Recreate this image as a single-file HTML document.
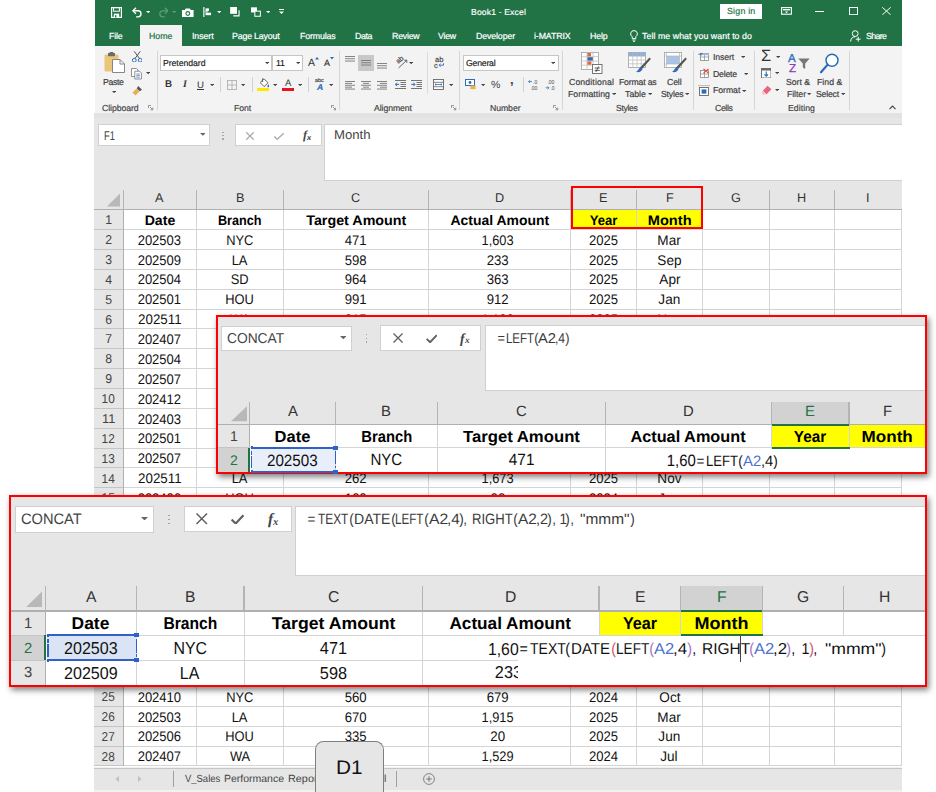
<!DOCTYPE html>
<html><head><meta charset="utf-8"><title>Book1 - Excel</title>
<style>
html,body{margin:0;padding:0}
body{width:936px;height:792px;position:relative;overflow:hidden;background:#fff;font-family:"Liberation Sans",sans-serif}
body div,body svg{position:absolute}
.ov{overflow:hidden}
.ov div,.ov svg{position:absolute}
</style></head><body>
<div style="left:95.00px;top:0.00px;width:807.00px;height:46.30px;background:#217346;"></div>
<svg style="left:110.50px;top:6.50px;" width="11" height="11" viewBox="0 0 11 11"><path d="M0.6 0.6H10.4V10.4H0.6Z" fill="none" stroke="#fff" stroke-width="1.2"/><rect x="2.6" y="0.6" width="5.8" height="3.6" fill="none" stroke="#fff" stroke-width="1"/><rect x="2.8" y="6.6" width="5.4" height="3.8" fill="#fff"/><rect x="4" y="8.2" width="1.4" height="2.2" fill="#217346"/></svg>
<svg style="left:132.00px;top:7.00px;" width="10.8" height="10.8" viewBox="0 0 12 12"><path d="M1 4.2H6.6A3.4 3.4 0 0 1 6.6 11H4.5" fill="none" stroke="#fff" stroke-width="1.5"/><path d="M4.4 0.8L1 4.2L4.4 7.6" fill="none" stroke="#fff" stroke-width="1.5"/></svg>
<svg style="left:145.80px;top:11.10px;" width="4.4" height="2.2" viewBox="0 0 4.4 2.2"><path d="M0 0H4.4L2.2 2.2Z" fill="#fff"/></svg>
<svg style="left:157.70px;top:7.00px;" width="10.8" height="10.8" viewBox="0 0 12 12"><path d="M11 4.2H5.4A3.4 3.4 0 0 0 5.4 11H7.5" fill="none" stroke="#5f9a7a" stroke-width="1.4"/><path d="M7.6 0.8L11 4.2L7.6 7.6" fill="none" stroke="#5f9a7a" stroke-width="1.4"/></svg>
<svg style="left:171.80px;top:11.10px;" width="4.4" height="2.2" viewBox="0 0 4.4 2.2"><path d="M0 0H4.4L2.2 2.2Z" fill="#5f9a7a"/></svg>
<svg style="left:182.30px;top:7.50px;" width="11.6" height="9.4" viewBox="0 0 11.6 9.4"><path d="M0 2H2.8L3.7 0.4H7.9L8.8 2H11.6V9.2H0Z" fill="#fff"/><circle cx="5.8" cy="5.5" r="2.4" fill="#217346"/><circle cx="5.8" cy="5.5" r="1.3" fill="#fff"/></svg>
<svg style="left:203.00px;top:7.00px;" width="8.5" height="10.4" viewBox="0 0 10 12"><path d="M1 0V12" stroke="#fff" stroke-width="1.3"/><rect x="3" y="1.5" width="4" height="3" fill="#fff"/><rect x="3" y="6.5" width="6.5" height="3" fill="#fff"/><path d="M2 5.5H6" stroke="#fff" stroke-width="1"/></svg>
<svg style="left:216.50px;top:11.10px;" width="4.4" height="2.2" viewBox="0 0 4.4 2.2"><path d="M0 0H4.4L2.2 2.2Z" fill="#fff"/></svg>
<svg style="left:229.70px;top:7.30px;" width="10.3" height="10" viewBox="0 0 11 11"><rect x="0" y="0" width="7.5" height="7.5" fill="#fff"/><path d="M9.8 3.5V9.8H3.5" fill="none" stroke="#fff" stroke-width="1.2"/></svg>
<svg style="left:250.90px;top:7.30px;" width="10.2" height="10" viewBox="0 0 12 11"><rect x="0" y="0" width="7" height="6" fill="#fff"/><rect x="4.5" y="4.5" width="6.5" height="6" fill="#217346" stroke="#fff" stroke-width="1.2"/></svg>
<svg style="left:265.80px;top:11.10px;" width="4.4" height="2.2" viewBox="0 0 4.4 2.2"><path d="M0 0H4.4L2.2 2.2Z" fill="#fff"/></svg>
<svg style="left:278.50px;top:9.00px;" width="5" height="6" viewBox="0 0 5 6"><path d="M0 0.5H5" stroke="#fff" stroke-width="1"/><path d="M0 2.5H5L2.5 5Z" fill="#fff"/></svg>
<div style="left:470.50px;top:5.66px;height:12px;line-height:12px;font-size:8.6px;color:#fff;white-space:nowrap;letter-spacing:0.149px;transform:rotate(0.03deg);-webkit-text-stroke:0.15px;">Book1 - Excel</div>
<div style="left:720.00px;top:4.00px;width:42.00px;height:14.50px;background:#fff;"></div>
<div style="left:726.75px;top:5.23px;height:12px;line-height:12px;font-size:8.8px;color:#217346;white-space:nowrap;letter-spacing:0.227px;transform:rotate(0.03deg);-webkit-text-stroke:0.18px;">Sign in</div>
<svg style="left:780.50px;top:7.20px;" width="11" height="8" viewBox="0 0 11 8"><rect x="0.6" y="0.6" width="9.8" height="6.6" fill="none" stroke="#fff" stroke-width="1.1"/><rect x="2" y="2" width="7" height="1.4" fill="#fff"/><path d="M3.8 4.4H7.2L5.5 6.2Z" fill="#fff"/></svg>
<div style="left:814.50px;top:11.00px;width:9.00px;height:1.00px;background:#fff;"></div>
<svg style="left:848.70px;top:7.00px;" width="9" height="8.2" viewBox="0 0 9 8.2"><rect x="0.5" y="0.5" width="8" height="7.2" fill="none" stroke="#fff" stroke-width="1"/></svg>
<svg style="left:882.00px;top:6.80px;" width="9" height="8.2" viewBox="0 0 9 8.2"><path d="M0.3 0.3L8.7 7.9M8.7 0.3L0.3 7.9" stroke="#fff" stroke-width="1"/></svg>
<div style="left:139.50px;top:25.00px;width:42.00px;height:21.50px;background:#f3f3f3;"></div>
<div style="left:109.25px;top:29.93px;height:12px;line-height:12px;font-size:8.8px;color:#fff;white-space:nowrap;letter-spacing:-0.170px;transform:rotate(0.03deg);-webkit-text-stroke:0.2px;">File</div>
<div style="left:148.55px;top:29.93px;height:12px;line-height:12px;font-size:8.8px;color:#217346;white-space:nowrap;letter-spacing:0.006px;transform:rotate(0.03deg);-webkit-text-stroke:0.2px;">Home</div>
<div style="left:191.55px;top:29.93px;height:12px;line-height:12px;font-size:8.8px;color:#fff;white-space:nowrap;letter-spacing:-0.085px;transform:rotate(0.03deg);-webkit-text-stroke:0.2px;">Insert</div>
<div style="left:232.25px;top:29.93px;height:12px;line-height:12px;font-size:8.8px;color:#fff;white-space:nowrap;letter-spacing:-0.175px;transform:rotate(0.03deg);-webkit-text-stroke:0.2px;">Page Layout</div>
<div style="left:299.75px;top:29.93px;height:12px;line-height:12px;font-size:8.8px;color:#fff;white-space:nowrap;letter-spacing:-0.147px;transform:rotate(0.03deg);-webkit-text-stroke:0.2px;">Formulas</div>
<div style="left:354.50px;top:29.93px;height:12px;line-height:12px;font-size:8.8px;color:#fff;white-space:nowrap;letter-spacing:-0.397px;transform:rotate(0.03deg);-webkit-text-stroke:0.2px;">Data</div>
<div style="left:391.55px;top:29.93px;height:12px;line-height:12px;font-size:8.8px;color:#fff;white-space:nowrap;letter-spacing:-0.226px;transform:rotate(0.03deg);-webkit-text-stroke:0.2px;">Review</div>
<div style="left:438.00px;top:29.93px;height:12px;line-height:12px;font-size:8.8px;color:#fff;white-space:nowrap;letter-spacing:-0.229px;transform:rotate(0.03deg);-webkit-text-stroke:0.2px;">View</div>
<div style="left:475.80px;top:29.93px;height:12px;line-height:12px;font-size:8.8px;color:#fff;white-space:nowrap;letter-spacing:-0.124px;transform:rotate(0.03deg);-webkit-text-stroke:0.2px;">Developer</div>
<div style="left:534.35px;top:29.93px;height:12px;line-height:12px;font-size:8.8px;color:#fff;white-space:nowrap;letter-spacing:-0.122px;transform:rotate(0.03deg);-webkit-text-stroke:0.2px;">i-MATRIX</div>
<div style="left:590.45px;top:29.93px;height:12px;line-height:12px;font-size:8.8px;color:#fff;white-space:nowrap;letter-spacing:-0.150px;transform:rotate(0.03deg);-webkit-text-stroke:0.2px;">Help</div>
<svg style="left:629.50px;top:29.50px;" width="8" height="12" viewBox="0 0 8 12"><path d="M4 0.6A3.3 3.3 0 0 1 5.8 6.7V8.6H2.2V6.7A3.3 3.3 0 0 1 4 0.6Z" fill="none" stroke="#fff" stroke-width="1"/><path d="M2.4 10H5.6M3 11.4H5" stroke="#fff" stroke-width="0.9"/></svg>
<div style="left:641.50px;top:29.93px;height:12px;line-height:12px;font-size:8.8px;color:#fff;white-space:nowrap;letter-spacing:0.052px;transform:rotate(0.03deg);-webkit-text-stroke:0.2px;">Tell me what you want to do</div>
<svg style="left:850.00px;top:29.50px;" width="11" height="12" viewBox="0 0 11 12"><circle cx="5.2" cy="3.6" r="2.9" fill="none" stroke="#fff" stroke-width="1"/><path d="M0.6 11.5C0.8 8 3 6.8 5.2 6.8" fill="none" stroke="#fff" stroke-width="1"/><path d="M8.2 6.8V11.6M5.8 9.2H10.6" stroke="#fff" stroke-width="1"/></svg>
<div style="left:865.60px;top:29.93px;height:12px;line-height:12px;font-size:8.8px;color:#fff;white-space:nowrap;letter-spacing:-0.637px;transform:rotate(0.03deg);-webkit-text-stroke:0.2px;">Share</div>
<div style="left:95.00px;top:46.00px;width:807.00px;height:67.00px;background:#f3f3f3;"></div>
<div style="left:157.00px;top:50.50px;width:1.00px;height:59.50px;background:#d6d6d6;"></div>
<div style="left:338.80px;top:50.50px;width:1.00px;height:59.50px;background:#d6d6d6;"></div>
<div style="left:458.50px;top:50.50px;width:1.00px;height:59.50px;background:#d6d6d6;"></div>
<div style="left:561.50px;top:50.50px;width:1.00px;height:59.50px;background:#d6d6d6;"></div>
<div style="left:692.50px;top:50.50px;width:1.00px;height:59.50px;background:#d6d6d6;"></div>
<div style="left:754.00px;top:50.50px;width:1.00px;height:59.50px;background:#d6d6d6;"></div>
<div style="left:848.50px;top:50.50px;width:1.00px;height:59.50px;background:#d6d6d6;"></div>
<div style="left:102.25px;top:101.89px;height:12px;line-height:12px;font-size:8.7px;color:#444;white-space:nowrap;letter-spacing:-0.082px;transform:rotate(0.03deg);-webkit-text-stroke:0.18px;">Clipboard</div>
<div style="left:233.50px;top:101.89px;height:12px;line-height:12px;font-size:8.7px;color:#444;white-space:nowrap;letter-spacing:-0.102px;transform:rotate(0.03deg);-webkit-text-stroke:0.18px;">Font</div>
<div style="left:374.30px;top:101.89px;height:12px;line-height:12px;font-size:8.7px;color:#444;white-space:nowrap;letter-spacing:-0.076px;transform:rotate(0.03deg);-webkit-text-stroke:0.18px;">Alignment</div>
<div style="left:489.75px;top:101.89px;height:12px;line-height:12px;font-size:8.7px;color:#444;white-space:nowrap;letter-spacing:-0.074px;transform:rotate(0.03deg);-webkit-text-stroke:0.18px;">Number</div>
<div style="left:616.25px;top:101.89px;height:12px;line-height:12px;font-size:8.7px;color:#444;white-space:nowrap;letter-spacing:-0.365px;transform:rotate(0.03deg);-webkit-text-stroke:0.18px;">Styles</div>
<div style="left:715.05px;top:101.89px;height:12px;line-height:12px;font-size:8.7px;color:#444;white-space:nowrap;letter-spacing:-0.368px;transform:rotate(0.03deg);-webkit-text-stroke:0.18px;">Cells</div>
<div style="left:788.20px;top:101.89px;height:12px;line-height:12px;font-size:8.7px;color:#444;white-space:nowrap;letter-spacing:0.057px;transform:rotate(0.03deg);-webkit-text-stroke:0.18px;">Editing</div>
<svg style="left:148.00px;top:105.00px;" width="5.5" height="5.5" viewBox="0 0 5.5 5.5"><path d="M0.4 3V0.4H3" fill="none" stroke="#777" stroke-width="0.8"/><path d="M2 2L4.6 4.6M4.8 2.6V4.8H2.6" fill="none" stroke="#777" stroke-width="0.8"/></svg>
<svg style="left:330.50px;top:105.00px;" width="5.5" height="5.5" viewBox="0 0 5.5 5.5"><path d="M0.4 3V0.4H3" fill="none" stroke="#777" stroke-width="0.8"/><path d="M2 2L4.6 4.6M4.8 2.6V4.8H2.6" fill="none" stroke="#777" stroke-width="0.8"/></svg>
<svg style="left:451.30px;top:105.00px;" width="5.5" height="5.5" viewBox="0 0 5.5 5.5"><path d="M0.4 3V0.4H3" fill="none" stroke="#777" stroke-width="0.8"/><path d="M2 2L4.6 4.6M4.8 2.6V4.8H2.6" fill="none" stroke="#777" stroke-width="0.8"/></svg>
<svg style="left:553.20px;top:105.00px;" width="5.5" height="5.5" viewBox="0 0 5.5 5.5"><path d="M0.4 3V0.4H3" fill="none" stroke="#777" stroke-width="0.8"/><path d="M2 2L4.6 4.6M4.8 2.6V4.8H2.6" fill="none" stroke="#777" stroke-width="0.8"/></svg>
<svg style="left:888.50px;top:104.50px;" width="7" height="5" viewBox="0 0 7 5"><path d="M0.5 4.2L3.5 1L6.5 4.2" fill="none" stroke="#444" stroke-width="1.1"/></svg>
<svg style="left:104.00px;top:52.00px;" width="21.5" height="21" viewBox="0 0 21.5 21"><rect x="0.5" y="2.5" width="14" height="17" rx="1" fill="#e8c77b" /><rect x="4" y="0.8" width="7" height="3.4" rx="0.8" fill="#6b6b6b"/><rect x="6" y="0" width="3" height="2" fill="#6b6b6b"/><path d="M8.5 7.5H16L20.5 12V20.5H8.5Z" fill="#fff" stroke="#7a7a7a" stroke-width="0.9"/><path d="M16 7.5V12H20.5" fill="none" stroke="#7a7a7a" stroke-width="0.9"/></svg>
<div style="left:103.05px;top:75.99px;height:12px;line-height:12px;font-size:8.7px;color:#3b3b3b;white-space:nowrap;letter-spacing:-0.350px;transform:rotate(0.03deg);-webkit-text-stroke:0.18px;">Paste</div>
<svg style="left:111.55px;top:91.22px;" width="4.3" height="2.15" viewBox="0 0 4.3 2.15"><path d="M0 0H4.3L2.15 2.15Z" fill="#444"/></svg>
<svg style="left:131.50px;top:50.50px;" width="10.5" height="11.5" viewBox="0 0 10.5 11.5"><path d="M2.2 0.3L7.6 7.6M8.3 0.3L2.9 7.6" stroke="#555" stroke-width="1"/><circle cx="2.3" cy="9.2" r="1.9" fill="none" stroke="#2b6cb8" stroke-width="1"/><circle cx="8.2" cy="9.2" r="1.9" fill="none" stroke="#2b6cb8" stroke-width="1"/></svg>
<svg style="left:130.50px;top:68.00px;" width="11" height="11.5" viewBox="0 0 11 11.5"><path d="M0.5 0.5H5.5L7 2V8.5H0.5Z" fill="#fff" stroke="#777" stroke-width="0.8"/><path d="M3.8 3.2H8.6L10.4 5V11H3.8Z" fill="#fff" stroke="#777" stroke-width="0.8"/><path d="M5.3 6H8.8M5.3 7.6H8.8M5.3 9.2H8.8" stroke="#2b6cb8" stroke-width="0.7"/></svg>
<svg style="left:146.15px;top:72.42px;" width="4.3" height="2.15" viewBox="0 0 4.3 2.15"><path d="M0 0H4.3L2.15 2.15Z" fill="#444"/></svg>
<svg style="left:131.50px;top:84.50px;" width="11" height="11" viewBox="0 0 11 11"><path d="M6.2 1L10 4.8L7.6 6.3L4.7 3.4Z" fill="#555"/><path d="M4.4 3.8L7.2 6.6L3.6 10.6L0.4 7.4Z" fill="#e8b04e"/></svg>
<div style="left:160.40px;top:54.60px;width:112.10px;height:16.40px;background:#fff;border:1px solid #c6c6c6;box-sizing:border-box;"></div>
<div style="left:272.00px;top:54.60px;width:31.30px;height:16.40px;background:#fff;border:1px solid #c6c6c6;box-sizing:border-box;"></div>
<div style="left:163.20px;top:56.99px;height:12px;line-height:12px;font-size:8.7px;color:#222;white-space:nowrap;letter-spacing:-0.055px;transform:rotate(0.03deg);-webkit-text-stroke:0.18px;">Pretendard</div>
<svg style="left:264.85px;top:62.12px;" width="4.3" height="2.15" viewBox="0 0 4.3 2.15"><path d="M0 0H4.3L2.15 2.15Z" fill="#444"/></svg>
<div style="left:275.60px;top:56.99px;height:12px;line-height:12px;font-size:8.7px;color:#222;white-space:nowrap;letter-spacing:-0.266px;transform:rotate(0.03deg);-webkit-text-stroke:0.18px;">11</div>
<svg style="left:296.15px;top:62.12px;" width="4.3" height="2.15" viewBox="0 0 4.3 2.15"><path d="M0 0H4.3L2.15 2.15Z" fill="#444"/></svg>
<div style="left:307.50px;top:55.41px;height:15px;line-height:15px;font-size:10.5px;color:#333;white-space:nowrap;transform:rotate(0.03deg);">A</div>
<svg style="left:314.80px;top:57.00px;" width="4" height="2.5" viewBox="0 0 4 2.5"><path d="M0 2.5L2 0L4 2.5Z" fill="#2b6cb8"/></svg>
<div style="left:324.20px;top:57.40px;height:13px;line-height:13px;font-size:9px;color:#333;white-space:nowrap;transform:rotate(0.03deg);-webkit-text-stroke:0.18px;">A</div>
<svg style="left:330.30px;top:57.20px;" width="4" height="2.5" viewBox="0 0 4 2.5"><path d="M0 0L2 2.5L4 0Z" fill="#2b6cb8"/></svg>
<div style="left:164.76px;top:77.37px;height:14px;line-height:14px;font-size:9.8px;color:#333;white-space:nowrap;font-weight:700;transform:rotate(0.03deg);">B</div>
<div style="left:183.01px;top:77.44px;height:14px;line-height:14px;font-size:10px;color:#333;white-space:nowrap;transform:rotate(0.03deg);font-style:italic;font-family:'Liberation Serif',serif;font-weight:700;">I</div>
<div style="left:196.83px;top:77.60px;height:13px;line-height:13px;font-size:9.6px;color:#333;white-space:nowrap;transform:rotate(0.03deg);text-decoration:underline;">U</div>
<svg style="left:209.55px;top:83.72px;" width="4.3" height="2.15" viewBox="0 0 4.3 2.15"><path d="M0 0H4.3L2.15 2.15Z" fill="#444"/></svg>
<div style="left:220.20px;top:77.00px;width:1.00px;height:15.00px;background:#d0d0d0;"></div>
<svg style="left:227.00px;top:79.50px;" width="10" height="10" viewBox="0 0 10 10"><rect x="0.5" y="0.5" width="9" height="9" fill="none" stroke="#b0b0b0" stroke-width="0.9"/><path d="M5 0.5V9.5M0.5 5H9.5" stroke="#b0b0b0" stroke-width="0.9"/></svg>
<svg style="left:241.45px;top:83.72px;" width="4.3" height="2.15" viewBox="0 0 4.3 2.15"><path d="M0 0H4.3L2.15 2.15Z" fill="#444"/></svg>
<div style="left:251.70px;top:77.00px;width:1.00px;height:15.00px;background:#d0d0d0;"></div>
<svg style="left:257.50px;top:77.50px;" width="11" height="10" viewBox="0 0 11 10"><path d="M3.2 3.4L6 0.8L10 4.8L6.2 8.6L2.4 4.8Z" fill="#fff" stroke="#555" stroke-width="0.9"/><path d="M4.6 0.4V4" stroke="#555" stroke-width="0.9"/><path d="M10.3 6.2C10.3 6.2 9.4 7.6 9.4 8.3A0.9 0.9 0 0 0 11.2 8.3C11.2 7.6 10.3 6.2 10.3 6.2Z" fill="#2b6cb8"/></svg>
<div style="left:257.30px;top:88.20px;width:11.50px;height:2.60px;background:#ffe800;"></div>
<svg style="left:272.55px;top:83.72px;" width="4.3" height="2.15" viewBox="0 0 4.3 2.15"><path d="M0 0H4.3L2.15 2.15Z" fill="#444"/></svg>
<div style="left:284.63px;top:76.47px;height:13px;line-height:13px;font-size:9.5px;color:#333;white-space:nowrap;transform:rotate(0.03deg);">A</div>
<div style="left:282.20px;top:88.20px;width:11.50px;height:2.60px;background:#e81123;"></div>
<svg style="left:297.55px;top:83.72px;" width="4.3" height="2.15" viewBox="0 0 4.3 2.15"><path d="M0 0H4.3L2.15 2.15Z" fill="#444"/></svg>
<div style="left:307.70px;top:77.00px;width:1.00px;height:15.00px;background:#d0d0d0;"></div>
<div style="left:314.57px;top:76.39px;height:8px;line-height:8px;font-size:5.5px;color:#444;white-space:nowrap;transform:rotate(0.03deg);-webkit-text-stroke:0.18px;">abc</div>
<div style="left:316.67px;top:80.72px;height:12px;line-height:12px;font-size:8.5px;color:#2b6cb8;white-space:nowrap;transform:rotate(0.03deg);font-style:italic;font-weight:700;-webkit-text-stroke:0.18px;">A</div>
<svg style="left:328.85px;top:83.72px;" width="4.3" height="2.15" viewBox="0 0 4.3 2.15"><path d="M0 0H4.3L2.15 2.15Z" fill="#444"/></svg>
<div style="left:358.00px;top:55.40px;width:16.00px;height:15.40px;background:#c8c8c8;"></div>
<svg style="left:345.00px;top:56.00px;" width="10" height="6.8999999999999995" viewBox="0 0 10 6.8999999999999995"><rect x="0" y="0.0" width="10" height="0.9" fill="#777"/><rect x="0" y="2.3" width="10" height="0.9" fill="#777"/><rect x="0" y="4.6" width="10" height="0.9" fill="#777"/></svg>
<svg style="left:361.00px;top:59.70px;" width="10" height="6.8999999999999995" viewBox="0 0 10 6.8999999999999995"><rect x="0" y="0.0" width="10" height="0.9" fill="#777"/><rect x="0" y="2.3" width="10" height="0.9" fill="#777"/><rect x="0" y="4.6" width="10" height="0.9" fill="#777"/></svg>
<svg style="left:377.00px;top:62.80px;" width="10" height="6.8999999999999995" viewBox="0 0 10 6.8999999999999995"><rect x="0" y="0.0" width="10" height="0.9" fill="#777"/><rect x="0" y="2.3" width="10" height="0.9" fill="#777"/><rect x="0" y="4.6" width="10" height="0.9" fill="#777"/></svg>
<div style="left:396.11px;top:55.21px;height:10px;line-height:10px;font-size:7px;color:#444;white-space:nowrap;transform:rotate(-42deg);-webkit-text-stroke:0.15px;">ab</div>
<svg style="left:397.00px;top:56.50px;" width="11" height="12" viewBox="0 0 11 12"><path d="M1.5 11L9.8 3.2M9.8 3.2H7.2M9.8 3.2V5.8" stroke="#555" stroke-width="0.9" fill="none"/></svg>
<svg style="left:408.85px;top:62.12px;" width="4.3" height="2.15" viewBox="0 0 4.3 2.15"><path d="M0 0H4.3L2.15 2.15Z" fill="#444"/></svg>
<div style="left:427.00px;top:52.00px;width:1.00px;height:42.00px;background:#dcdcdc;"></div>
<div style="left:434.57px;top:53.61px;height:11px;line-height:11px;font-size:7.6px;color:#444;white-space:nowrap;transform:rotate(0.03deg);-webkit-text-stroke:0.15px;">ab</div>
<div style="left:433.90px;top:59.81px;height:11px;line-height:11px;font-size:7.6px;color:#444;white-space:nowrap;transform:rotate(0.03deg);-webkit-text-stroke:0.15px;">c</div>
<svg style="left:438.00px;top:63.00px;" width="6" height="5" viewBox="0 0 6 5"><path d="M5.5 0.3V2.2H1.2M2.6 0.8L1 2.2L2.6 3.8" fill="none" stroke="#2b6cb8" stroke-width="0.9"/></svg>
<svg style="left:345.00px;top:81.00px;" width="10" height="9.5" viewBox="0 0 10 9.5"><rect x="0" y="0.0" width="10" height="0.9" fill="#777"/><rect x="0" y="1.9" width="7" height="0.9" fill="#777"/><rect x="0" y="3.8" width="10" height="0.9" fill="#777"/><rect x="0" y="5.699999999999999" width="7" height="0.9" fill="#777"/><rect x="0" y="7.6" width="10" height="0.9" fill="#777"/></svg>
<svg style="left:361.00px;top:81.00px;" width="10" height="9.5" viewBox="0 0 10 9.5"><rect x="0.0" y="0.0" width="10" height="0.9" fill="#777"/><rect x="2.0" y="1.9" width="6" height="0.9" fill="#777"/><rect x="0.0" y="3.8" width="10" height="0.9" fill="#777"/><rect x="2.0" y="5.699999999999999" width="6" height="0.9" fill="#777"/><rect x="0.0" y="7.6" width="10" height="0.9" fill="#777"/></svg>
<svg style="left:377.00px;top:81.00px;" width="10" height="9.5" viewBox="0 0 10 9.5"><rect x="0" y="0.0" width="10" height="0.9" fill="#777"/><rect x="3" y="1.9" width="7" height="0.9" fill="#777"/><rect x="0" y="3.8" width="10" height="0.9" fill="#777"/><rect x="3" y="5.699999999999999" width="7" height="0.9" fill="#777"/><rect x="0" y="7.6" width="10" height="0.9" fill="#777"/></svg>
<svg style="left:394.50px;top:80.00px;" width="11" height="10" viewBox="0 0 11 10"><rect x="0" y="0" width="11" height="0.9" fill="#666"/><rect x="5.5" y="2" width="5.5" height="0.9" fill="#666"/><rect x="5.5" y="4" width="5.5" height="0.9" fill="#666"/><rect x="5.5" y="6" width="5.5" height="0.9" fill="#666"/><rect x="0" y="8" width="11" height="0.9" fill="#666"/><path d="M4.2 4.4H0.6M2 2.6L0.4 4.4L2 6.2" stroke="#2b6cb8" stroke-width="1" fill="none"/></svg>
<svg style="left:410.50px;top:80.00px;" width="11" height="10" viewBox="0 0 11 10"><rect x="0" y="0" width="11" height="0.9" fill="#666"/><rect x="5.5" y="2" width="5.5" height="0.9" fill="#666"/><rect x="5.5" y="4" width="5.5" height="0.9" fill="#666"/><rect x="5.5" y="6" width="5.5" height="0.9" fill="#666"/><rect x="0" y="8" width="11" height="0.9" fill="#666"/><path d="M0.2 4.4H3.8M2.4 2.6L4 4.4L2.4 6.2" stroke="#2b6cb8" stroke-width="1" fill="none"/></svg>
<svg style="left:433.00px;top:79.00px;" width="11" height="11" viewBox="0 0 11 11"><rect x="0.5" y="0.5" width="10" height="10" fill="#fff" stroke="#666" stroke-width="0.9"/><path d="M0.5 3.3H10.5M0.5 7.7H10.5" stroke="#666" stroke-width="0.8"/><path d="M2 5.5H9M3.2 4.4L2 5.5L3.2 6.6M7.8 4.4L9 5.5L7.8 6.6" stroke="#2b6cb8" stroke-width="0.8" fill="none"/></svg>
<svg style="left:448.85px;top:83.72px;" width="4.3" height="2.15" viewBox="0 0 4.3 2.15"><path d="M0 0H4.3L2.15 2.15Z" fill="#444"/></svg>
<div style="left:463.00px;top:54.70px;width:96.00px;height:16.80px;background:#fff;border:1px solid #c6c6c6;box-sizing:border-box;"></div>
<div style="left:465.80px;top:56.99px;height:12px;line-height:12px;font-size:8.7px;color:#222;white-space:nowrap;letter-spacing:-0.207px;transform:rotate(0.03deg);-webkit-text-stroke:0.18px;">General</div>
<svg style="left:550.85px;top:62.12px;" width="4.3" height="2.15" viewBox="0 0 4.3 2.15"><path d="M0 0H4.3L2.15 2.15Z" fill="#444"/></svg>
<svg style="left:464.50px;top:79.00px;" width="12" height="11" viewBox="0 0 12 11"><rect x="0.5" y="0.5" width="9" height="6" fill="#fff" stroke="#2b6cb8" stroke-width="1"/><circle cx="5" cy="3.5" r="1.4" fill="#2b6cb8"/><ellipse cx="8" cy="7.4" rx="3" ry="1.1" fill="#e8b04e"/><ellipse cx="8" cy="9.2" rx="3" ry="1.1" fill="#e8b04e"/></svg>
<svg style="left:481.45px;top:83.72px;" width="4.3" height="2.15" viewBox="0 0 4.3 2.15"><path d="M0 0H4.3L2.15 2.15Z" fill="#444"/></svg>
<div style="left:491.33px;top:76.61px;height:15px;line-height:15px;font-size:10.5px;color:#444;white-space:nowrap;transform:rotate(0.03deg);">%</div>
<div style="left:510.19px;top:70.97px;height:18px;line-height:18px;font-size:13px;color:#444;white-space:nowrap;transform:rotate(0.03deg);font-weight:700;">,</div>
<div style="left:522.70px;top:77.00px;width:1.00px;height:15.00px;background:#d0d0d0;"></div>
<svg style="left:528.00px;top:78.50px;" width="12" height="12" viewBox="0 0 12 12"><path d="M0.6 2.6H4M2 1.2L0.6 2.6L2 4" stroke="#2b6cb8" stroke-width="0.8" fill="none"/><text x="5" y="5" font-size="5" fill="#444" font-family="Liberation Sans">.0</text><text x="2.4" y="11.2" font-size="5" fill="#444" font-family="Liberation Sans">.00</text></svg>
<svg style="left:544.50px;top:78.50px;" width="12" height="12" viewBox="0 0 12 12"><path d="M0.6 8.8H4M2.6 7.4L4 8.8L2.6 10.2" stroke="#2b6cb8" stroke-width="0.8" fill="none"/><text x="2.4" y="5" font-size="5" fill="#444" font-family="Liberation Sans">.00</text><text x="5.4" y="11.2" font-size="5" fill="#444" font-family="Liberation Sans">.0</text></svg>
<svg style="left:581.00px;top:52.00px;" width="21.5" height="22" viewBox="0 0 21.5 22"><rect x="0.5" y="0.5" width="17" height="17" fill="#fff" stroke="#a0a0a0" stroke-width="0.8"/><path d="M0.5 4.7H17.5M0.5 9H17.5M0.5 13.2H17.5M6 0.5V17.5M12 0.5V17.5" stroke="#b8b8b8" stroke-width="0.7"/><rect x="6.4" y="1" width="3.6" height="3.4" fill="#e8643c"/><rect x="6.4" y="5.2" width="5.4" height="3.4" fill="#2b6cb8"/><rect x="6.4" y="9.4" width="4" height="3.4" fill="#e8643c"/><rect x="11.5" y="12.5" width="9.5" height="9" fill="#fff" stroke="#666" stroke-width="0.9"/><path d="M13.6 16H18.8M13.6 18.4H18.8M17.6 14.4L14.8 20" stroke="#333" stroke-width="0.8"/></svg>
<div style="left:568.80px;top:75.99px;height:12px;line-height:12px;font-size:8.7px;color:#3b3b3b;white-space:nowrap;letter-spacing:0.134px;transform:rotate(0.03deg);-webkit-text-stroke:0.18px;">Conditional</div>
<div style="left:568.30px;top:87.69px;height:12px;line-height:12px;font-size:8.7px;color:#3b3b3b;white-space:nowrap;letter-spacing:0.042px;transform:rotate(0.03deg);-webkit-text-stroke:0.18px;">Formatting</div>
<svg style="left:611.85px;top:93.22px;" width="4.3" height="2.15" viewBox="0 0 4.3 2.15"><path d="M0 0H4.3L2.15 2.15Z" fill="#444"/></svg>
<svg style="left:628.00px;top:52.00px;" width="23" height="22" viewBox="0 0 23 22"><rect x="0.5" y="0.5" width="17" height="15" fill="#fff" stroke="#a0a0a0" stroke-width="0.8"/><rect x="0.5" y="0.5" width="17" height="3.6" fill="#8db0dc"/><path d="M0.5 4.2H17.5M0.5 8H17.5M0.5 11.8H17.5M4.8 0.5V15.5M9 0.5V15.5M13.2 0.5V15.5" stroke="#b8b8b8" stroke-width="0.7"/><path d="M21.5 5.5L22.8 7L14 17L12 15.5Z" fill="#555"/><path d="M12.5 15L14.5 17C13 20.5 10 20.5 8 19.8C10 19 10.5 16.5 12.5 15Z" fill="#2b6cb8"/></svg>
<div style="left:618.85px;top:75.99px;height:12px;line-height:12px;font-size:8.7px;color:#3b3b3b;white-space:nowrap;letter-spacing:-0.184px;transform:rotate(0.03deg);-webkit-text-stroke:0.18px;">Format as</div>
<div style="left:625.10px;top:87.69px;height:12px;line-height:12px;font-size:8.7px;color:#3b3b3b;white-space:nowrap;letter-spacing:0.040px;transform:rotate(0.03deg);-webkit-text-stroke:0.18px;">Table</div>
<svg style="left:648.15px;top:93.22px;" width="4.3" height="2.15" viewBox="0 0 4.3 2.15"><path d="M0 0H4.3L2.15 2.15Z" fill="#444"/></svg>
<svg style="left:664.00px;top:52.00px;" width="23" height="22" viewBox="0 0 23 22"><rect x="0.5" y="0.5" width="17" height="15" fill="#fff" stroke="#a0a0a0" stroke-width="0.8"/><rect x="2.5" y="4" width="13" height="8" fill="#a8c4e8"/><path d="M0.5 4H17.5M0.5 12H17.5M2.5 0.5V15.5M15.5 0.5V15.5" stroke="#b8b8b8" stroke-width="0.7"/><path d="M21.5 5.5L22.8 7L14 17L12 15.5Z" fill="#555"/><path d="M12.5 15L14.5 17C13 20.5 10 20.5 8 19.8C10 19 10.5 16.5 12.5 15Z" fill="#2b6cb8"/></svg>
<div style="left:667.05px;top:75.99px;height:12px;line-height:12px;font-size:8.7px;color:#3b3b3b;white-space:nowrap;letter-spacing:-0.122px;transform:rotate(0.03deg);-webkit-text-stroke:0.18px;">Cell</div>
<div style="left:661.05px;top:87.69px;height:12px;line-height:12px;font-size:8.7px;color:#3b3b3b;white-space:nowrap;letter-spacing:-0.199px;transform:rotate(0.03deg);-webkit-text-stroke:0.18px;">Styles</div>
<svg style="left:685.15px;top:93.22px;" width="4.3" height="2.15" viewBox="0 0 4.3 2.15"><path d="M0 0H4.3L2.15 2.15Z" fill="#444"/></svg>
<svg style="left:698.00px;top:51.00px;" width="12" height="12" viewBox="0 0 12 12"><rect x="2.5" y="2.5" width="8" height="7" fill="#fff" stroke="#888" stroke-width="0.8"/><path d="M2.5 6H10.5M6.5 2.5V9.5" stroke="#888" stroke-width="0.7"/><path d="M0.3 3.2H4.2M3 1.8L4.4 3.2L3 4.6" stroke="#2b6cb8" stroke-width="0.9" fill="none"/><rect x="5" y="2.2" width="6" height="2" fill="#9ab8e0"/></svg>
<div style="left:712.80px;top:51.39px;height:12px;line-height:12px;font-size:8.7px;color:#3b3b3b;white-space:nowrap;letter-spacing:-0.093px;transform:rotate(0.03deg);-webkit-text-stroke:0.18px;">Insert</div>
<svg style="left:740.85px;top:56.22px;" width="4.3" height="2.15" viewBox="0 0 4.3 2.15"><path d="M0 0H4.3L2.15 2.15Z" fill="#444"/></svg>
<svg style="left:698.00px;top:68.00px;" width="12" height="12" viewBox="0 0 12 12"><rect x="2.5" y="2.5" width="8" height="7" fill="#fff" stroke="#888" stroke-width="0.8"/><path d="M2.5 6H10.5M6.5 2.5V9.5" stroke="#888" stroke-width="0.7"/><path d="M5.5 0.8L10.5 5.2M10.5 0.8L5.5 5.2" stroke="#e8412c" stroke-width="1.1"/></svg>
<div style="left:712.80px;top:67.99px;height:12px;line-height:12px;font-size:8.7px;color:#3b3b3b;white-space:nowrap;letter-spacing:-0.192px;transform:rotate(0.03deg);-webkit-text-stroke:0.18px;">Delete</div>
<svg style="left:743.85px;top:72.72px;" width="4.3" height="2.15" viewBox="0 0 4.3 2.15"><path d="M0 0H4.3L2.15 2.15Z" fill="#444"/></svg>
<svg style="left:698.00px;top:84.50px;" width="12" height="12" viewBox="0 0 12 12"><rect x="1.5" y="2.5" width="9" height="8" fill="#fff" stroke="#666" stroke-width="0.9"/><rect x="3.6" y="4.4" width="4.8" height="4.2" fill="#2b6cb8"/><path d="M0.5 0.6H11.5" stroke="#666" stroke-width="0.8" stroke-dasharray="1 1"/></svg>
<div style="left:712.80px;top:84.49px;height:12px;line-height:12px;font-size:8.7px;color:#3b3b3b;white-space:nowrap;letter-spacing:-0.042px;transform:rotate(0.03deg);-webkit-text-stroke:0.18px;">Format</div>
<svg style="left:742.15px;top:89.72px;" width="4.3" height="2.15" viewBox="0 0 4.3 2.15"><path d="M0 0H4.3L2.15 2.15Z" fill="#444"/></svg>
<div style="left:760.50px;top:44.38px;height:23px;line-height:23px;font-size:16.5px;color:#333;white-space:nowrap;transform:rotate(0.03deg);">Σ</div>
<svg style="left:775.85px;top:55.72px;" width="4.3" height="2.15" viewBox="0 0 4.3 2.15"><path d="M0 0H4.3L2.15 2.15Z" fill="#444"/></svg>
<svg style="left:760.50px;top:67.50px;" width="10.5" height="10.5" viewBox="0 0 10.5 10.5"><rect x="0.5" y="0.5" width="9.5" height="9.5" fill="#fff" stroke="#666" stroke-width="0.9"/><rect x="0.5" y="0.5" width="9.5" height="2" fill="#666"/><path d="M5.25 3.6V8M3.4 6.3L5.25 8.2L7.1 6.3" stroke="#2b6cb8" stroke-width="1.1" fill="none"/></svg>
<svg style="left:775.15px;top:72.22px;" width="4.3" height="2.15" viewBox="0 0 4.3 2.15"><path d="M0 0H4.3L2.15 2.15Z" fill="#444"/></svg>
<svg style="left:760.50px;top:85.00px;" width="11" height="10" viewBox="0 0 11 10"><path d="M6.6 0.8L10.4 4.2L5.6 9.2L1.8 5.8Z" fill="#e8647c"/><path d="M1.8 5.8L5.6 9.2L4.6 9.8H2.2L0.6 8.2Z" fill="#f7c4cc"/></svg>
<svg style="left:775.15px;top:89.22px;" width="4.3" height="2.15" viewBox="0 0 4.3 2.15"><path d="M0 0H4.3L2.15 2.15Z" fill="#444"/></svg>
<div style="left:788.46px;top:49.56px;height:16px;line-height:16px;font-size:11.5px;color:#2b6cb8;white-space:nowrap;transform:rotate(0.03deg);-webkit-text-stroke:0.3px;">A</div>
<div style="left:788.99px;top:59.76px;height:16px;line-height:16px;font-size:11.5px;color:#8a3fb8;white-space:nowrap;transform:rotate(0.03deg);-webkit-text-stroke:0.3px;">Z</div>
<svg style="left:797.50px;top:57.60px;" width="12" height="11.5" viewBox="0 0 12 11.5"><path d="M0.3 0.5H11.7L7.2 5.4V11L4.8 9.4V5.4Z" fill="#777"/></svg>
<div style="left:786.30px;top:75.99px;height:12px;line-height:12px;font-size:8.7px;color:#3b3b3b;white-space:nowrap;letter-spacing:-0.029px;transform:rotate(0.03deg);-webkit-text-stroke:0.18px;">Sort &amp;</div>
<div style="left:787.00px;top:87.69px;height:12px;line-height:12px;font-size:8.7px;color:#3b3b3b;white-space:nowrap;letter-spacing:-0.056px;transform:rotate(0.03deg);-webkit-text-stroke:0.18px;">Filter</div>
<svg style="left:807.45px;top:93.22px;" width="4.3" height="2.15" viewBox="0 0 4.3 2.15"><path d="M0 0H4.3L2.15 2.15Z" fill="#444"/></svg>
<svg style="left:819.50px;top:52.50px;" width="20" height="21" viewBox="0 0 20 21"><circle cx="12" cy="7.2" r="6" fill="#fff" stroke="#2b6cb8" stroke-width="1.5"/><path d="M7.6 11.6L1 19.2" stroke="#2b6cb8" stroke-width="2.2" stroke-linecap="round"/></svg>
<div style="left:816.95px;top:75.99px;height:12px;line-height:12px;font-size:8.7px;color:#3b3b3b;white-space:nowrap;letter-spacing:0.059px;transform:rotate(0.03deg);-webkit-text-stroke:0.18px;">Find &amp;</div>
<div style="left:816.00px;top:87.69px;height:12px;line-height:12px;font-size:8.7px;color:#3b3b3b;white-space:nowrap;letter-spacing:-0.197px;transform:rotate(0.03deg);-webkit-text-stroke:0.18px;">Select</div>
<svg style="left:840.55px;top:93.22px;" width="4.3" height="2.15" viewBox="0 0 4.3 2.15"><path d="M0 0H4.3L2.15 2.15Z" fill="#444"/></svg>
<div style="left:94.00px;top:113.00px;width:808.00px;height:5.00px;background:#e2e2e2;"></div>
<div style="left:94.00px;top:118.00px;width:808.00px;height:71.00px;background:#e6e6e6;"></div>
<div style="left:98.30px;top:124.40px;width:112.20px;height:22.00px;background:#fff;border:1px solid #d0d0d0;box-sizing:border-box;"></div>
<div style="left:103.84px;top:126.50px;height:18px;line-height:18px;font-size:12.8px;color:#444;white-space:nowrap;transform:rotate(0.03deg) scaleX(0.7248);transform-origin:left center;">F1</div>
<svg style="left:199.65px;top:133.27px;" width="5.7" height="2.85" viewBox="0 0 5.7 2.85"><path d="M0 0H5.7L2.85 2.85Z" fill="#666"/></svg>
<div style="left:222.30px;top:131.70px;width:1.25px;height:1.25px;background:#aaa;"></div>
<div style="left:222.30px;top:135.00px;width:1.25px;height:1.25px;background:#aaa;"></div>
<div style="left:222.30px;top:138.30px;width:1.25px;height:1.25px;background:#aaa;"></div>
<div style="left:234.70px;top:124.40px;width:87.20px;height:21.80px;background:#fff;border:1px solid #d0d0d0;box-sizing:border-box;"></div>
<svg style="left:245.90px;top:131.80px;" width="8.0" height="8.0" viewBox="0 0 8.0 8.0"><path d="M0.3 0.3L7.7 7.7M7.7 0.3L0.3 7.7" stroke="#ababab" stroke-width="1.25"/></svg>
<svg style="left:274.10px;top:131.80px;" width="10.0" height="8.0" viewBox="0 0 10.0 8.0"><path d="M0.3 4.5L3.25 7.25L9.7 1.25" fill="none" stroke="#ababab" stroke-width="1.35"/></svg>
<div style="left:303.31px;top:127.29px;height:17px;line-height:17px;font-size:12.19px;color:#444;white-space:nowrap;transform:rotate(0.03deg);font-family:'Liberation Serif',serif;font-style:italic;font-weight:700;">f</div>
<div style="left:306.73px;top:131.84px;height:12px;line-height:12px;font-size:8.268px;color:#444;white-space:nowrap;transform:rotate(0.03deg);font-family:'Liberation Serif',serif;font-style:italic;font-weight:700;-webkit-text-stroke:0.18px;">x</div>
<div style="left:324.40px;top:124.40px;width:577.60px;height:56.40px;background:#fff;border:1px solid #d0d0d0;border-right:none;box-sizing:border-box;"></div>
<div style="left:334.34px;top:125.90px;height:18px;line-height:18px;font-size:12.8px;color:#444;white-space:nowrap;transform:rotate(0.03deg) scaleX(1.0293);transform-origin:left center;">Month</div>
<div style="left:94.00px;top:189.00px;width:808.00px;height:20.00px;background:#e6e6e6;"></div>
<div style="left:94.00px;top:209.00px;width:29.00px;height:556.98px;background:#e6e6e6;"></div>
<div style="left:570.90px;top:209.70px;width:131.40px;height:19.87px;background:#ffff00;"></div>
<div style="left:122.50px;top:209.70px;width:1.00px;height:556.28px;background:#d4d4d4;"></div>
<div style="left:195.90px;top:209.70px;width:1.00px;height:556.28px;background:#d4d4d4;"></div>
<div style="left:283.10px;top:209.70px;width:1.00px;height:556.28px;background:#d4d4d4;"></div>
<div style="left:427.80px;top:209.70px;width:1.00px;height:556.28px;background:#d4d4d4;"></div>
<div style="left:570.40px;top:209.70px;width:1.00px;height:556.28px;background:#d4d4d4;"></div>
<div style="left:636.00px;top:209.70px;width:1.00px;height:556.28px;background:#d4d4d4;"></div>
<div style="left:701.80px;top:209.70px;width:1.00px;height:556.28px;background:#d4d4d4;"></div>
<div style="left:768.50px;top:209.70px;width:1.00px;height:556.28px;background:#d4d4d4;"></div>
<div style="left:834.20px;top:209.70px;width:1.00px;height:556.28px;background:#d4d4d4;"></div>
<div style="left:901.00px;top:209.70px;width:1.00px;height:556.28px;background:#d4d4d4;"></div>
<div style="left:123.00px;top:229.07px;width:778.50px;height:1.00px;background:#d4d4d4;"></div>
<div style="left:123.00px;top:248.93px;width:778.50px;height:1.00px;background:#d4d4d4;"></div>
<div style="left:123.00px;top:268.80px;width:778.50px;height:1.00px;background:#d4d4d4;"></div>
<div style="left:123.00px;top:288.67px;width:778.50px;height:1.00px;background:#d4d4d4;"></div>
<div style="left:123.00px;top:308.53px;width:778.50px;height:1.00px;background:#d4d4d4;"></div>
<div style="left:123.00px;top:328.40px;width:778.50px;height:1.00px;background:#d4d4d4;"></div>
<div style="left:123.00px;top:348.27px;width:778.50px;height:1.00px;background:#d4d4d4;"></div>
<div style="left:123.00px;top:368.14px;width:778.50px;height:1.00px;background:#d4d4d4;"></div>
<div style="left:123.00px;top:388.00px;width:778.50px;height:1.00px;background:#d4d4d4;"></div>
<div style="left:123.00px;top:407.87px;width:778.50px;height:1.00px;background:#d4d4d4;"></div>
<div style="left:123.00px;top:427.74px;width:778.50px;height:1.00px;background:#d4d4d4;"></div>
<div style="left:123.00px;top:447.60px;width:778.50px;height:1.00px;background:#d4d4d4;"></div>
<div style="left:123.00px;top:467.47px;width:778.50px;height:1.00px;background:#d4d4d4;"></div>
<div style="left:123.00px;top:487.34px;width:778.50px;height:1.00px;background:#d4d4d4;"></div>
<div style="left:123.00px;top:507.20px;width:778.50px;height:1.00px;background:#d4d4d4;"></div>
<div style="left:123.00px;top:527.07px;width:778.50px;height:1.00px;background:#d4d4d4;"></div>
<div style="left:123.00px;top:546.94px;width:778.50px;height:1.00px;background:#d4d4d4;"></div>
<div style="left:123.00px;top:566.81px;width:778.50px;height:1.00px;background:#d4d4d4;"></div>
<div style="left:123.00px;top:586.67px;width:778.50px;height:1.00px;background:#d4d4d4;"></div>
<div style="left:123.00px;top:606.54px;width:778.50px;height:1.00px;background:#d4d4d4;"></div>
<div style="left:123.00px;top:626.41px;width:778.50px;height:1.00px;background:#d4d4d4;"></div>
<div style="left:123.00px;top:646.27px;width:778.50px;height:1.00px;background:#d4d4d4;"></div>
<div style="left:123.00px;top:666.14px;width:778.50px;height:1.00px;background:#d4d4d4;"></div>
<div style="left:123.00px;top:686.01px;width:778.50px;height:1.00px;background:#d4d4d4;"></div>
<div style="left:123.00px;top:705.88px;width:778.50px;height:1.00px;background:#d4d4d4;"></div>
<div style="left:123.00px;top:725.74px;width:778.50px;height:1.00px;background:#d4d4d4;"></div>
<div style="left:123.00px;top:745.61px;width:778.50px;height:1.00px;background:#d4d4d4;"></div>
<div style="left:123.00px;top:765.48px;width:778.50px;height:1.00px;background:#d4d4d4;"></div>
<div style="left:122.50px;top:190.00px;width:1.00px;height:19.00px;background:#b4b4b4;"></div>
<div style="left:195.90px;top:190.00px;width:1.00px;height:19.00px;background:#b4b4b4;"></div>
<div style="left:283.10px;top:190.00px;width:1.00px;height:19.00px;background:#b4b4b4;"></div>
<div style="left:427.80px;top:190.00px;width:1.00px;height:19.00px;background:#b4b4b4;"></div>
<div style="left:570.40px;top:190.00px;width:1.00px;height:19.00px;background:#b4b4b4;"></div>
<div style="left:636.00px;top:190.00px;width:1.00px;height:19.00px;background:#b4b4b4;"></div>
<div style="left:701.80px;top:190.00px;width:1.00px;height:19.00px;background:#b4b4b4;"></div>
<div style="left:768.50px;top:190.00px;width:1.00px;height:19.00px;background:#b4b4b4;"></div>
<div style="left:834.20px;top:190.00px;width:1.00px;height:19.00px;background:#b4b4b4;"></div>
<div style="left:94.00px;top:208.70px;width:808.00px;height:1.00px;background:#b0b0b0;"></div>
<div style="left:122.50px;top:209.00px;width:1.00px;height:556.98px;background:#b0b0b0;"></div>
<div style="left:94.00px;top:229.07px;width:29.30px;height:1.00px;background:#c4c4c4;"></div>
<div style="left:94.00px;top:248.93px;width:29.30px;height:1.00px;background:#c4c4c4;"></div>
<div style="left:94.00px;top:268.80px;width:29.30px;height:1.00px;background:#c4c4c4;"></div>
<div style="left:94.00px;top:288.67px;width:29.30px;height:1.00px;background:#c4c4c4;"></div>
<div style="left:94.00px;top:308.53px;width:29.30px;height:1.00px;background:#c4c4c4;"></div>
<div style="left:94.00px;top:328.40px;width:29.30px;height:1.00px;background:#c4c4c4;"></div>
<div style="left:94.00px;top:348.27px;width:29.30px;height:1.00px;background:#c4c4c4;"></div>
<div style="left:94.00px;top:368.14px;width:29.30px;height:1.00px;background:#c4c4c4;"></div>
<div style="left:94.00px;top:388.00px;width:29.30px;height:1.00px;background:#c4c4c4;"></div>
<div style="left:94.00px;top:407.87px;width:29.30px;height:1.00px;background:#c4c4c4;"></div>
<div style="left:94.00px;top:427.74px;width:29.30px;height:1.00px;background:#c4c4c4;"></div>
<div style="left:94.00px;top:447.60px;width:29.30px;height:1.00px;background:#c4c4c4;"></div>
<div style="left:94.00px;top:467.47px;width:29.30px;height:1.00px;background:#c4c4c4;"></div>
<div style="left:94.00px;top:487.34px;width:29.30px;height:1.00px;background:#c4c4c4;"></div>
<div style="left:94.00px;top:507.20px;width:29.30px;height:1.00px;background:#c4c4c4;"></div>
<div style="left:94.00px;top:527.07px;width:29.30px;height:1.00px;background:#c4c4c4;"></div>
<div style="left:94.00px;top:546.94px;width:29.30px;height:1.00px;background:#c4c4c4;"></div>
<div style="left:94.00px;top:566.81px;width:29.30px;height:1.00px;background:#c4c4c4;"></div>
<div style="left:94.00px;top:586.67px;width:29.30px;height:1.00px;background:#c4c4c4;"></div>
<div style="left:94.00px;top:606.54px;width:29.30px;height:1.00px;background:#c4c4c4;"></div>
<div style="left:94.00px;top:626.41px;width:29.30px;height:1.00px;background:#c4c4c4;"></div>
<div style="left:94.00px;top:646.27px;width:29.30px;height:1.00px;background:#c4c4c4;"></div>
<div style="left:94.00px;top:666.14px;width:29.30px;height:1.00px;background:#c4c4c4;"></div>
<div style="left:94.00px;top:686.01px;width:29.30px;height:1.00px;background:#c4c4c4;"></div>
<div style="left:94.00px;top:705.88px;width:29.30px;height:1.00px;background:#c4c4c4;"></div>
<div style="left:94.00px;top:725.74px;width:29.30px;height:1.00px;background:#c4c4c4;"></div>
<div style="left:94.00px;top:745.61px;width:29.30px;height:1.00px;background:#c4c4c4;"></div>
<div style="left:94.00px;top:765.48px;width:29.30px;height:1.00px;background:#c4c4c4;"></div>
<svg style="left:106.50px;top:193.30px;" width="13.5" height="13.5" viewBox="0 0 13.5 13.5"><path d="M13.5 0V13.5H0Z" fill="#b8b8b8"/></svg>
<div style="left:155.46px;top:188.97px;height:18px;line-height:18px;font-size:12.7px;color:#333;white-space:nowrap;transform:rotate(0.03deg);">A</div>
<div style="left:235.76px;top:188.97px;height:18px;line-height:18px;font-size:12.7px;color:#333;white-space:nowrap;transform:rotate(0.03deg);">B</div>
<div style="left:351.36px;top:188.97px;height:18px;line-height:18px;font-size:12.7px;color:#333;white-space:nowrap;transform:rotate(0.03deg);">C</div>
<div style="left:495.01px;top:188.97px;height:18px;line-height:18px;font-size:12.7px;color:#333;white-space:nowrap;transform:rotate(0.03deg);">D</div>
<div style="left:599.46px;top:188.97px;height:18px;line-height:18px;font-size:12.7px;color:#333;white-space:nowrap;transform:rotate(0.03deg);">E</div>
<div style="left:665.52px;top:188.97px;height:18px;line-height:18px;font-size:12.7px;color:#333;white-space:nowrap;transform:rotate(0.03deg);">F</div>
<div style="left:730.71px;top:188.97px;height:18px;line-height:18px;font-size:12.7px;color:#333;white-space:nowrap;transform:rotate(0.03deg);">G</div>
<div style="left:797.26px;top:188.97px;height:18px;line-height:18px;font-size:12.7px;color:#333;white-space:nowrap;transform:rotate(0.03deg);">H</div>
<div style="left:866.34px;top:188.97px;height:18px;line-height:18px;font-size:12.7px;color:#333;white-space:nowrap;transform:rotate(0.03deg);">I</div>
<div style="left:104.61px;top:211.27px;height:18px;line-height:18px;font-size:12.9px;color:#444;white-space:nowrap;transform:rotate(0.03deg) scaleX(0.9516);transform-origin:center center;">1</div>
<div style="left:144.74px;top:210.78px;height:19px;line-height:19px;font-size:13.8px;color:#000;white-space:nowrap;font-weight:700;transform:rotate(0.03deg) scaleX(1.0234);transform-origin:center center;">Date</div>
<div style="left:216.23px;top:210.78px;height:19px;line-height:19px;font-size:13.8px;color:#000;white-space:nowrap;font-weight:700;transform:rotate(0.03deg) scaleX(0.9163);transform-origin:center center;">Branch</div>
<div style="left:307.65px;top:210.78px;height:19px;line-height:19px;font-size:13.8px;color:#000;white-space:nowrap;font-weight:700;transform:rotate(0.03deg) scaleX(1.0366);transform-origin:center center;">Target Amount</div>
<div style="left:450.79px;top:210.78px;height:19px;line-height:19px;font-size:13.8px;color:#000;white-space:nowrap;font-weight:700;transform:rotate(0.03deg) scaleX(1.0100);transform-origin:center center;">Actual Amount</div>
<div style="left:589.12px;top:210.78px;height:19px;line-height:19px;font-size:13.8px;color:#000;white-space:nowrap;font-weight:700;transform:rotate(0.03deg) scaleX(0.9502);transform-origin:center center;">Year</div>
<div style="left:648.71px;top:210.78px;height:19px;line-height:19px;font-size:13.8px;color:#000;white-space:nowrap;font-weight:700;transform:rotate(0.03deg) scaleX(1.0575);transform-origin:center center;">Month</div>
<div style="left:104.61px;top:231.14px;height:18px;line-height:18px;font-size:12.9px;color:#444;white-space:nowrap;transform:rotate(0.03deg) scaleX(0.9516);transform-origin:center center;">2</div>
<div style="left:136.34px;top:229.72px;height:20px;line-height:20px;font-size:14.0px;color:#111;white-space:nowrap;transform:rotate(0.03deg) scaleX(0.9290);transform-origin:center center;">202503</div>
<div style="left:225.22px;top:229.72px;height:20px;line-height:20px;font-size:14.0px;color:#111;white-space:nowrap;transform:rotate(0.03deg) scaleX(0.9200);transform-origin:center center;">NYC</div>
<div style="left:344.27px;top:229.72px;height:20px;line-height:20px;font-size:14.0px;color:#111;white-space:nowrap;transform:rotate(0.03deg) scaleX(0.9404);transform-origin:center center;">471</div>
<div style="left:479.98px;top:229.72px;height:20px;line-height:20px;font-size:14.0px;color:#111;white-space:nowrap;transform:rotate(0.03deg) scaleX(0.9127);transform-origin:center center;">1,603</div>
<div style="left:588.13px;top:229.72px;height:20px;line-height:20px;font-size:14.0px;color:#111;white-space:nowrap;transform:rotate(0.03deg) scaleX(0.9346);transform-origin:center center;">2025</div>
<div style="left:657.34px;top:229.72px;height:20px;line-height:20px;font-size:14.0px;color:#111;white-space:nowrap;transform:rotate(0.03deg) scaleX(0.9700);transform-origin:center center;">Mar</div>
<div style="left:104.61px;top:251.01px;height:18px;line-height:18px;font-size:12.9px;color:#444;white-space:nowrap;transform:rotate(0.03deg) scaleX(0.9516);transform-origin:center center;">3</div>
<div style="left:136.34px;top:249.58px;height:20px;line-height:20px;font-size:14.0px;color:#111;white-space:nowrap;transform:rotate(0.03deg) scaleX(0.9290);transform-origin:center center;">202509</div>
<div style="left:231.44px;top:249.58px;height:20px;line-height:20px;font-size:14.0px;color:#111;white-space:nowrap;transform:rotate(0.03deg) scaleX(0.9200);transform-origin:center center;">LA</div>
<div style="left:344.27px;top:249.58px;height:20px;line-height:20px;font-size:14.0px;color:#111;white-space:nowrap;transform:rotate(0.03deg) scaleX(0.9404);transform-origin:center center;">598</div>
<div style="left:485.82px;top:249.58px;height:20px;line-height:20px;font-size:14.0px;color:#111;white-space:nowrap;transform:rotate(0.03deg) scaleX(0.9404);transform-origin:center center;">233</div>
<div style="left:588.13px;top:249.58px;height:20px;line-height:20px;font-size:14.0px;color:#111;white-space:nowrap;transform:rotate(0.03deg) scaleX(0.9346);transform-origin:center center;">2025</div>
<div style="left:656.94px;top:249.58px;height:20px;line-height:20px;font-size:14.0px;color:#111;white-space:nowrap;transform:rotate(0.03deg) scaleX(0.9700);transform-origin:center center;">Sep</div>
<div style="left:104.61px;top:270.87px;height:18px;line-height:18px;font-size:12.9px;color:#444;white-space:nowrap;transform:rotate(0.03deg) scaleX(0.9516);transform-origin:center center;">4</div>
<div style="left:136.34px;top:269.45px;height:20px;line-height:20px;font-size:14.0px;color:#111;white-space:nowrap;transform:rotate(0.03deg) scaleX(0.9290);transform-origin:center center;">202504</div>
<div style="left:230.28px;top:269.45px;height:20px;line-height:20px;font-size:14.0px;color:#111;white-space:nowrap;transform:rotate(0.03deg) scaleX(0.9200);transform-origin:center center;">SD</div>
<div style="left:344.27px;top:269.45px;height:20px;line-height:20px;font-size:14.0px;color:#111;white-space:nowrap;transform:rotate(0.03deg) scaleX(0.9404);transform-origin:center center;">964</div>
<div style="left:485.82px;top:269.45px;height:20px;line-height:20px;font-size:14.0px;color:#111;white-space:nowrap;transform:rotate(0.03deg) scaleX(0.9404);transform-origin:center center;">363</div>
<div style="left:588.13px;top:269.45px;height:20px;line-height:20px;font-size:14.0px;color:#111;white-space:nowrap;transform:rotate(0.03deg) scaleX(0.9346);transform-origin:center center;">2025</div>
<div style="left:658.51px;top:269.45px;height:20px;line-height:20px;font-size:14.0px;color:#111;white-space:nowrap;transform:rotate(0.03deg) scaleX(0.9700);transform-origin:center center;">Apr</div>
<div style="left:104.61px;top:290.74px;height:18px;line-height:18px;font-size:12.9px;color:#444;white-space:nowrap;transform:rotate(0.03deg) scaleX(0.9516);transform-origin:center center;">5</div>
<div style="left:136.34px;top:289.32px;height:20px;line-height:20px;font-size:14.0px;color:#111;white-space:nowrap;transform:rotate(0.03deg) scaleX(0.9290);transform-origin:center center;">202501</div>
<div style="left:224.44px;top:289.32px;height:20px;line-height:20px;font-size:14.0px;color:#111;white-space:nowrap;transform:rotate(0.03deg) scaleX(0.9200);transform-origin:center center;">HOU</div>
<div style="left:344.27px;top:289.32px;height:20px;line-height:20px;font-size:14.0px;color:#111;white-space:nowrap;transform:rotate(0.03deg) scaleX(0.9404);transform-origin:center center;">991</div>
<div style="left:485.82px;top:289.32px;height:20px;line-height:20px;font-size:14.0px;color:#111;white-space:nowrap;transform:rotate(0.03deg) scaleX(0.9404);transform-origin:center center;">912</div>
<div style="left:588.13px;top:289.32px;height:20px;line-height:20px;font-size:14.0px;color:#111;white-space:nowrap;transform:rotate(0.03deg) scaleX(0.9346);transform-origin:center center;">2025</div>
<div style="left:658.11px;top:289.32px;height:20px;line-height:20px;font-size:14.0px;color:#111;white-space:nowrap;transform:rotate(0.03deg) scaleX(0.9700);transform-origin:center center;">Jan</div>
<div style="left:104.61px;top:310.61px;height:18px;line-height:18px;font-size:12.9px;color:#444;white-space:nowrap;transform:rotate(0.03deg) scaleX(0.9516);transform-origin:center center;">6</div>
<div style="left:136.86px;top:309.18px;height:20px;line-height:20px;font-size:14.0px;color:#111;white-space:nowrap;transform:rotate(0.03deg) scaleX(0.9508);transform-origin:center center;">202511</div>
<div style="left:228.98px;top:309.18px;height:20px;line-height:20px;font-size:14.0px;color:#111;white-space:nowrap;transform:rotate(0.03deg) scaleX(0.9200);transform-origin:center center;">WA</div>
<div style="left:344.27px;top:309.18px;height:20px;line-height:20px;font-size:14.0px;color:#111;white-space:nowrap;transform:rotate(0.03deg) scaleX(0.9404);transform-origin:center center;">815</div>
<div style="left:479.98px;top:309.18px;height:20px;line-height:20px;font-size:14.0px;color:#111;white-space:nowrap;transform:rotate(0.03deg) scaleX(0.9127);transform-origin:center center;">1,186</div>
<div style="left:588.13px;top:309.18px;height:20px;line-height:20px;font-size:14.0px;color:#111;white-space:nowrap;transform:rotate(0.03deg) scaleX(0.9346);transform-origin:center center;">2025</div>
<div style="left:656.95px;top:309.18px;height:20px;line-height:20px;font-size:14.0px;color:#111;white-space:nowrap;transform:rotate(0.03deg) scaleX(0.9700);transform-origin:center center;">Nov</div>
<div style="left:104.61px;top:330.47px;height:18px;line-height:18px;font-size:12.9px;color:#444;white-space:nowrap;transform:rotate(0.03deg) scaleX(0.9516);transform-origin:center center;">7</div>
<div style="left:136.34px;top:329.05px;height:20px;line-height:20px;font-size:14.0px;color:#111;white-space:nowrap;transform:rotate(0.03deg) scaleX(0.9290);transform-origin:center center;">202407</div>
<div style="left:104.61px;top:350.34px;height:18px;line-height:18px;font-size:12.9px;color:#444;white-space:nowrap;transform:rotate(0.03deg) scaleX(0.9516);transform-origin:center center;">8</div>
<div style="left:136.34px;top:348.92px;height:20px;line-height:20px;font-size:14.0px;color:#111;white-space:nowrap;transform:rotate(0.03deg) scaleX(0.9290);transform-origin:center center;">202504</div>
<div style="left:104.61px;top:370.21px;height:18px;line-height:18px;font-size:12.9px;color:#444;white-space:nowrap;transform:rotate(0.03deg) scaleX(0.9516);transform-origin:center center;">9</div>
<div style="left:136.34px;top:368.79px;height:20px;line-height:20px;font-size:14.0px;color:#111;white-space:nowrap;transform:rotate(0.03deg) scaleX(0.9290);transform-origin:center center;">202507</div>
<div style="left:101.03px;top:390.07px;height:18px;line-height:18px;font-size:12.9px;color:#444;white-space:nowrap;transform:rotate(0.03deg) scaleX(0.9189);transform-origin:center center;">10</div>
<div style="left:136.34px;top:388.65px;height:20px;line-height:20px;font-size:14.0px;color:#111;white-space:nowrap;transform:rotate(0.03deg) scaleX(0.9290);transform-origin:center center;">202412</div>
<div style="left:101.50px;top:409.94px;height:18px;line-height:18px;font-size:12.9px;color:#444;white-space:nowrap;transform:rotate(0.03deg) scaleX(0.9916);transform-origin:center center;">11</div>
<div style="left:136.34px;top:408.52px;height:20px;line-height:20px;font-size:14.0px;color:#111;white-space:nowrap;transform:rotate(0.03deg) scaleX(0.9290);transform-origin:center center;">202403</div>
<div style="left:101.03px;top:429.81px;height:18px;line-height:18px;font-size:12.9px;color:#444;white-space:nowrap;transform:rotate(0.03deg) scaleX(0.9189);transform-origin:center center;">12</div>
<div style="left:136.34px;top:428.39px;height:20px;line-height:20px;font-size:14.0px;color:#111;white-space:nowrap;transform:rotate(0.03deg) scaleX(0.9290);transform-origin:center center;">202501</div>
<div style="left:101.03px;top:449.68px;height:18px;line-height:18px;font-size:12.9px;color:#444;white-space:nowrap;transform:rotate(0.03deg) scaleX(0.9189);transform-origin:center center;">13</div>
<div style="left:136.34px;top:448.25px;height:20px;line-height:20px;font-size:14.0px;color:#111;white-space:nowrap;transform:rotate(0.03deg) scaleX(0.9290);transform-origin:center center;">202507</div>
<div style="left:101.03px;top:469.54px;height:18px;line-height:18px;font-size:12.9px;color:#444;white-space:nowrap;transform:rotate(0.03deg) scaleX(0.9189);transform-origin:center center;">14</div>
<div style="left:136.86px;top:468.12px;height:20px;line-height:20px;font-size:14.0px;color:#111;white-space:nowrap;transform:rotate(0.03deg) scaleX(0.9508);transform-origin:center center;">202511</div>
<div style="left:231.44px;top:468.12px;height:20px;line-height:20px;font-size:14.0px;color:#111;white-space:nowrap;transform:rotate(0.03deg) scaleX(0.9200);transform-origin:center center;">LA</div>
<div style="left:344.27px;top:468.12px;height:20px;line-height:20px;font-size:14.0px;color:#111;white-space:nowrap;transform:rotate(0.03deg) scaleX(0.9404);transform-origin:center center;">262</div>
<div style="left:479.98px;top:468.12px;height:20px;line-height:20px;font-size:14.0px;color:#111;white-space:nowrap;transform:rotate(0.03deg) scaleX(0.9127);transform-origin:center center;">1,673</div>
<div style="left:588.13px;top:468.12px;height:20px;line-height:20px;font-size:14.0px;color:#111;white-space:nowrap;transform:rotate(0.03deg) scaleX(0.9346);transform-origin:center center;">2025</div>
<div style="left:656.95px;top:468.12px;height:20px;line-height:20px;font-size:14.0px;color:#111;white-space:nowrap;transform:rotate(0.03deg) scaleX(0.9700);transform-origin:center center;">Nov</div>
<div style="left:101.03px;top:489.41px;height:18px;line-height:18px;font-size:12.9px;color:#444;white-space:nowrap;transform:rotate(0.03deg) scaleX(0.9189);transform-origin:center center;">15</div>
<div style="left:136.34px;top:487.99px;height:20px;line-height:20px;font-size:14.0px;color:#111;white-space:nowrap;transform:rotate(0.03deg) scaleX(0.9290);transform-origin:center center;">202406</div>
<div style="left:224.44px;top:487.99px;height:20px;line-height:20px;font-size:14.0px;color:#111;white-space:nowrap;transform:rotate(0.03deg) scaleX(0.9200);transform-origin:center center;">HOU</div>
<div style="left:344.27px;top:487.99px;height:20px;line-height:20px;font-size:14.0px;color:#111;white-space:nowrap;transform:rotate(0.03deg) scaleX(0.9404);transform-origin:center center;">160</div>
<div style="left:489.71px;top:487.99px;height:20px;line-height:20px;font-size:14.0px;color:#111;white-space:nowrap;transform:rotate(0.03deg) scaleX(0.9525);transform-origin:center center;">66</div>
<div style="left:588.13px;top:487.99px;height:20px;line-height:20px;font-size:14.0px;color:#111;white-space:nowrap;transform:rotate(0.03deg) scaleX(0.9346);transform-origin:center center;">2024</div>
<div style="left:658.11px;top:487.99px;height:20px;line-height:20px;font-size:14.0px;color:#111;white-space:nowrap;transform:rotate(0.03deg) scaleX(0.9700);transform-origin:center center;">Jun</div>
<div style="left:101.03px;top:509.28px;height:18px;line-height:18px;font-size:12.9px;color:#444;white-space:nowrap;transform:rotate(0.03deg) scaleX(0.9189);transform-origin:center center;">16</div>
<div style="left:101.03px;top:529.14px;height:18px;line-height:18px;font-size:12.9px;color:#444;white-space:nowrap;transform:rotate(0.03deg) scaleX(0.9189);transform-origin:center center;">17</div>
<div style="left:101.03px;top:549.01px;height:18px;line-height:18px;font-size:12.9px;color:#444;white-space:nowrap;transform:rotate(0.03deg) scaleX(0.9189);transform-origin:center center;">18</div>
<div style="left:101.03px;top:568.88px;height:18px;line-height:18px;font-size:12.9px;color:#444;white-space:nowrap;transform:rotate(0.03deg) scaleX(0.9189);transform-origin:center center;">19</div>
<div style="left:101.03px;top:588.74px;height:18px;line-height:18px;font-size:12.9px;color:#444;white-space:nowrap;transform:rotate(0.03deg) scaleX(0.9189);transform-origin:center center;">20</div>
<div style="left:101.03px;top:608.61px;height:18px;line-height:18px;font-size:12.9px;color:#444;white-space:nowrap;transform:rotate(0.03deg) scaleX(0.9189);transform-origin:center center;">21</div>
<div style="left:101.03px;top:628.48px;height:18px;line-height:18px;font-size:12.9px;color:#444;white-space:nowrap;transform:rotate(0.03deg) scaleX(0.9189);transform-origin:center center;">22</div>
<div style="left:101.03px;top:648.35px;height:18px;line-height:18px;font-size:12.9px;color:#444;white-space:nowrap;transform:rotate(0.03deg) scaleX(0.9189);transform-origin:center center;">23</div>
<div style="left:101.03px;top:668.21px;height:18px;line-height:18px;font-size:12.9px;color:#444;white-space:nowrap;transform:rotate(0.03deg) scaleX(0.9189);transform-origin:center center;">24</div>
<div style="left:101.03px;top:688.08px;height:18px;line-height:18px;font-size:12.9px;color:#444;white-space:nowrap;transform:rotate(0.03deg) scaleX(0.9189);transform-origin:center center;">25</div>
<div style="left:136.34px;top:686.66px;height:20px;line-height:20px;font-size:14.0px;color:#111;white-space:nowrap;transform:rotate(0.03deg) scaleX(0.9290);transform-origin:center center;">202410</div>
<div style="left:225.22px;top:686.66px;height:20px;line-height:20px;font-size:14.0px;color:#111;white-space:nowrap;transform:rotate(0.03deg) scaleX(0.9200);transform-origin:center center;">NYC</div>
<div style="left:344.27px;top:686.66px;height:20px;line-height:20px;font-size:14.0px;color:#111;white-space:nowrap;transform:rotate(0.03deg) scaleX(0.9404);transform-origin:center center;">560</div>
<div style="left:485.82px;top:686.66px;height:20px;line-height:20px;font-size:14.0px;color:#111;white-space:nowrap;transform:rotate(0.03deg) scaleX(0.9404);transform-origin:center center;">679</div>
<div style="left:588.13px;top:686.66px;height:20px;line-height:20px;font-size:14.0px;color:#111;white-space:nowrap;transform:rotate(0.03deg) scaleX(0.9346);transform-origin:center center;">2024</div>
<div style="left:658.51px;top:686.66px;height:20px;line-height:20px;font-size:14.0px;color:#111;white-space:nowrap;transform:rotate(0.03deg) scaleX(0.9700);transform-origin:center center;">Oct</div>
<div style="left:101.03px;top:707.95px;height:18px;line-height:18px;font-size:12.9px;color:#444;white-space:nowrap;transform:rotate(0.03deg) scaleX(0.9189);transform-origin:center center;">26</div>
<div style="left:136.34px;top:706.52px;height:20px;line-height:20px;font-size:14.0px;color:#111;white-space:nowrap;transform:rotate(0.03deg) scaleX(0.9290);transform-origin:center center;">202503</div>
<div style="left:231.44px;top:706.52px;height:20px;line-height:20px;font-size:14.0px;color:#111;white-space:nowrap;transform:rotate(0.03deg) scaleX(0.9200);transform-origin:center center;">LA</div>
<div style="left:344.27px;top:706.52px;height:20px;line-height:20px;font-size:14.0px;color:#111;white-space:nowrap;transform:rotate(0.03deg) scaleX(0.9404);transform-origin:center center;">670</div>
<div style="left:479.98px;top:706.52px;height:20px;line-height:20px;font-size:14.0px;color:#111;white-space:nowrap;transform:rotate(0.03deg) scaleX(0.9127);transform-origin:center center;">1,915</div>
<div style="left:588.13px;top:706.52px;height:20px;line-height:20px;font-size:14.0px;color:#111;white-space:nowrap;transform:rotate(0.03deg) scaleX(0.9346);transform-origin:center center;">2025</div>
<div style="left:657.34px;top:706.52px;height:20px;line-height:20px;font-size:14.0px;color:#111;white-space:nowrap;transform:rotate(0.03deg) scaleX(0.9700);transform-origin:center center;">Mar</div>
<div style="left:101.03px;top:727.81px;height:18px;line-height:18px;font-size:12.9px;color:#444;white-space:nowrap;transform:rotate(0.03deg) scaleX(0.9189);transform-origin:center center;">27</div>
<div style="left:136.34px;top:726.39px;height:20px;line-height:20px;font-size:14.0px;color:#111;white-space:nowrap;transform:rotate(0.03deg) scaleX(0.9290);transform-origin:center center;">202506</div>
<div style="left:224.44px;top:726.39px;height:20px;line-height:20px;font-size:14.0px;color:#111;white-space:nowrap;transform:rotate(0.03deg) scaleX(0.9200);transform-origin:center center;">HOU</div>
<div style="left:344.27px;top:726.39px;height:20px;line-height:20px;font-size:14.0px;color:#111;white-space:nowrap;transform:rotate(0.03deg) scaleX(0.9404);transform-origin:center center;">335</div>
<div style="left:489.71px;top:726.39px;height:20px;line-height:20px;font-size:14.0px;color:#111;white-space:nowrap;transform:rotate(0.03deg) scaleX(0.9525);transform-origin:center center;">20</div>
<div style="left:588.13px;top:726.39px;height:20px;line-height:20px;font-size:14.0px;color:#111;white-space:nowrap;transform:rotate(0.03deg) scaleX(0.9346);transform-origin:center center;">2025</div>
<div style="left:658.11px;top:726.39px;height:20px;line-height:20px;font-size:14.0px;color:#111;white-space:nowrap;transform:rotate(0.03deg) scaleX(0.9700);transform-origin:center center;">Jun</div>
<div style="left:101.03px;top:747.68px;height:18px;line-height:18px;font-size:12.9px;color:#444;white-space:nowrap;transform:rotate(0.03deg) scaleX(0.9189);transform-origin:center center;">28</div>
<div style="left:136.34px;top:746.26px;height:20px;line-height:20px;font-size:14.0px;color:#111;white-space:nowrap;transform:rotate(0.03deg) scaleX(0.9290);transform-origin:center center;">202407</div>
<div style="left:228.98px;top:746.26px;height:20px;line-height:20px;font-size:14.0px;color:#111;white-space:nowrap;transform:rotate(0.03deg) scaleX(0.9200);transform-origin:center center;">WA</div>
<div style="left:479.98px;top:746.26px;height:20px;line-height:20px;font-size:14.0px;color:#111;white-space:nowrap;transform:rotate(0.03deg) scaleX(0.9127);transform-origin:center center;">1,529</div>
<div style="left:588.13px;top:746.26px;height:20px;line-height:20px;font-size:14.0px;color:#111;white-space:nowrap;transform:rotate(0.03deg) scaleX(0.9346);transform-origin:center center;">2024</div>
<div style="left:660.45px;top:746.26px;height:20px;line-height:20px;font-size:14.0px;color:#111;white-space:nowrap;transform:rotate(0.03deg) scaleX(0.9700);transform-origin:center center;">Jul</div>
<div style="left:571.00px;top:186.40px;width:131.80px;height:42.60px;border:2px solid #f00;box-sizing:border-box;"></div>
<div style="left:94.00px;top:766.98px;width:808.00px;height:2.00px;background:#f0f0f0;"></div>
<div style="left:94.00px;top:768.30px;width:808.00px;height:21.90px;background:#e6e6e6;"></div>
<div style="left:94.00px;top:767.80px;width:808.00px;height:1.00px;background:#c6c6c6;"></div>
<div style="left:94.00px;top:790.20px;width:808.00px;height:2.00px;background:#f1f1f1;"></div>
<svg style="left:114.50px;top:776.00px;" width="4" height="6" viewBox="0 0 4 6"><path d="M4 0V6L0.5 3Z" fill="#c0c0c0"/></svg>
<svg style="left:138.00px;top:776.00px;" width="4" height="6" viewBox="0 0 4 6"><path d="M0 0V6L3.5 3Z" fill="#c0c0c0"/></svg>
<div style="left:173.20px;top:771.30px;width:1.30px;height:15.80px;background:#a0a0a0;"></div>
<div style="left:184.53px;top:771.48px;height:15px;line-height:15px;font-size:10.4px;color:#444;white-space:nowrap;transform:rotate(0.03deg) scaleX(0.9099);transform-origin:left center;">V_Sales</div>
<div style="left:224.18px;top:771.48px;height:15px;line-height:15px;font-size:10.4px;color:#444;white-space:nowrap;transform:rotate(0.03deg) scaleX(1.0086);transform-origin:left center;">Performance</div>
<div style="left:287.66px;top:771.48px;height:15px;line-height:15px;font-size:10.4px;color:#444;white-space:nowrap;transform:rotate(0.03deg) scaleX(1.0439);transform-origin:left center;">Report</div>
<div style="left:383.60px;top:771.48px;height:15px;line-height:15px;font-size:10.4px;color:#444;white-space:nowrap;transform:rotate(0.03deg);">l</div>
<div style="left:395.80px;top:771.30px;width:1.30px;height:15.80px;background:#a0a0a0;"></div>
<svg style="left:423.30px;top:773.30px;" width="12" height="12" viewBox="0 0 12 12"><circle cx="6" cy="6" r="5.4" fill="none" stroke="#777" stroke-width="0.9"/><path d="M6 3.2V8.8M3.2 6H8.8" stroke="#777" stroke-width="1"/></svg>
<div style="left:216.00px;top:315.30px;width:711.20px;height:158.70px;background:#e6e6e6;border:2px solid #ff0000;box-sizing:border-box;box-shadow:2px 3px 6px rgba(0,0,0,0.5);"></div>
<div style="left:221.30px;top:325.60px;width:130.80px;height:25.30px;background:#fff;border:1px solid #d0d0d0;box-sizing:border-box;"></div>
<div style="left:226.81px;top:328.42px;height:20px;line-height:20px;font-size:14.3px;color:#444;white-space:nowrap;transform:rotate(0.03deg) scaleX(0.9639);transform-origin:left center;">CONCAT</div>
<svg style="left:339.50px;top:335.75px;" width="6.6" height="3.3" viewBox="0 0 6.6 3.3"><path d="M0 0H6.6L3.3 3.3Z" fill="#666"/></svg>
<div style="left:365.61px;top:333.81px;width:1.44px;height:1.44px;background:#a0a0a0;"></div>
<div style="left:365.61px;top:337.61px;width:1.44px;height:1.44px;background:#a0a0a0;"></div>
<div style="left:365.61px;top:341.41px;width:1.44px;height:1.44px;background:#a0a0a0;"></div>
<div style="left:380.30px;top:325.00px;width:101.00px;height:25.80px;background:#fff;border:1px solid #d0d0d0;box-sizing:border-box;"></div>
<svg style="left:392.66px;top:333.26px;" width="10.080000000000002" height="10.080000000000002" viewBox="0 0 10.080000000000002 10.080000000000002"><path d="M0.5 0.5L9.580000000000002 9.580000000000002M9.580000000000002 0.5L0.5 9.580000000000002" stroke="#606060" stroke-width="1.288"/></svg>
<svg style="left:425.69px;top:333.73px;" width="11.424" height="9.1392" viewBox="0 0 11.424 9.1392"><path d="M0.6 4.8552L4.11264 8.282399999999999L10.824 1.02816" fill="none" stroke="#606060" stroke-width="1.9040000000000001"/></svg>
<div style="left:460.25px;top:328.72px;height:19px;line-height:19px;font-size:13.708799999999998px;color:#444;white-space:nowrap;transform:rotate(0.03deg);font-family:'Liberation Serif',serif;font-style:italic;font-weight:700;">f</div>
<div style="left:464.58px;top:334.07px;height:13px;line-height:13px;font-size:9.1392px;color:#444;white-space:nowrap;transform:rotate(0.03deg);font-family:'Liberation Serif',serif;font-style:italic;font-weight:700;">x</div>
<div style="left:485.40px;top:325.00px;width:440.00px;height:66.40px;background:#fff;border:1px solid #d0d0d0;border-right:none;box-sizing:border-box;"></div>
<div style="left:0;top:0;width:0;height:20px;line-height:20px;font-size:14.2px;color:#3a3a3a;white-space:nowrap"><div style="left:496.80px;top:327.78px;transform:rotate(0.03deg) scaleX(0.9000);transform-origin:center center">=</div><div style="left:506.23px;top:327.78px;transform:rotate(0.03deg) scaleX(0.8079);transform-origin:left center">LEFT</div><div style="left:533.84px;top:327.78px;transform:rotate(0.03deg) scaleX(0.9000);transform-origin:center center">(</div><div style="left:537.86px;top:327.78px;transform:rotate(0.03deg) scaleX(1.0408);transform-origin:left center">A2</div><div style="left:555.29px;top:327.78px;transform:rotate(0.03deg) scaleX(0.8539);transform-origin:left center">,4</div><div style="left:565.24px;top:327.78px;transform:rotate(0.03deg) scaleX(0.9000);transform-origin:center center">)</div></div>
<div style="left:249.70px;top:424.90px;width:675.50px;height:47.10px;background:#fff;"></div>
<div style="left:771.50px;top:401.50px;width:77.50px;height:23.40px;background:#d2d2d2;"></div>
<div style="left:218.00px;top:447.80px;width:31.70px;height:24.20px;background:#d2d2d2;"></div>
<div style="left:771.50px;top:424.90px;width:153.70px;height:22.90px;background:#ffff00;"></div>
<div style="left:335.10px;top:424.90px;width:1.00px;height:47.10px;background:#d4d4d4;"></div>
<div style="left:436.70px;top:424.90px;width:1.00px;height:47.10px;background:#d4d4d4;"></div>
<div style="left:605.10px;top:424.90px;width:1.00px;height:47.10px;background:#d4d4d4;"></div>
<div style="left:771.00px;top:424.90px;width:1.00px;height:47.10px;background:#d4d4d4;"></div>
<div style="left:848.50px;top:424.90px;width:1.00px;height:47.10px;background:#d4d4d4;"></div>
<div style="left:249.70px;top:447.30px;width:675.50px;height:1.00px;background:#d4d4d4;"></div>
<div style="left:249.10px;top:401.50px;width:1.20px;height:23.40px;background:#b4b4b4;"></div>
<div style="left:335.00px;top:401.50px;width:1.20px;height:23.40px;background:#b4b4b4;"></div>
<div style="left:436.60px;top:401.50px;width:1.20px;height:23.40px;background:#b4b4b4;"></div>
<div style="left:605.00px;top:401.50px;width:1.20px;height:23.40px;background:#b4b4b4;"></div>
<div style="left:770.90px;top:401.50px;width:1.20px;height:23.40px;background:#b4b4b4;"></div>
<div style="left:848.40px;top:401.50px;width:1.20px;height:23.40px;background:#b4b4b4;"></div>
<div style="left:218.00px;top:424.30px;width:707.20px;height:1.20px;background:#b0b0b0;"></div>
<div style="left:249.10px;top:424.90px;width:1.20px;height:47.10px;background:#b0b0b0;"></div>
<div style="left:218.00px;top:447.30px;width:31.70px;height:1.00px;background:#c4c4c4;"></div>
<svg style="left:230.60px;top:406.40px;" width="16.200000000000017" height="15.300000000000011" viewBox="0 0 16.200000000000017 15.300000000000011"><path d="M16.200000000000017 0V15.300000000000011H0Z" fill="#b8b8b8"/></svg>
<div style="left:771.50px;top:423.70px;width:77.50px;height:2.00px;background:#217346;"></div>
<div style="left:771.50px;top:446.60px;width:78.50px;height:2.00px;background:#217346;"></div>
<div style="left:248.10px;top:447.80px;width:2.00px;height:24.20px;background:#217346;"></div>
<div style="left:287.69px;top:401.21px;height:21px;line-height:21px;font-size:14.858999999999998px;color:#333;white-space:nowrap;transform:rotate(0.03deg);">A</div>
<div style="left:381.44px;top:401.21px;height:21px;line-height:21px;font-size:14.858999999999998px;color:#333;white-space:nowrap;transform:rotate(0.03deg);">B</div>
<div style="left:516.03px;top:401.21px;height:21px;line-height:21px;font-size:14.858999999999998px;color:#333;white-space:nowrap;transform:rotate(0.03deg);">C</div>
<div style="left:683.18px;top:401.21px;height:21px;line-height:21px;font-size:14.858999999999998px;color:#333;white-space:nowrap;transform:rotate(0.03deg);">D</div>
<div style="left:805.29px;top:401.21px;height:21px;line-height:21px;font-size:14.858999999999998px;color:#217346;white-space:nowrap;transform:rotate(0.03deg);">E</div>
<div style="left:882.56px;top:401.21px;height:21px;line-height:21px;font-size:14.858999999999998px;color:#333;white-space:nowrap;transform:rotate(0.03deg);">F</div>
<div style="left:229.55px;top:426.38px;height:20px;line-height:20px;font-size:14.04px;color:#444;white-space:nowrap;transform:rotate(0.03deg);">1</div>
<div style="left:275.15px;top:424.60px;height:23px;line-height:23px;font-size:16.146px;color:#000;white-space:nowrap;font-weight:700;transform:rotate(0.03deg) scaleX(1.0234);transform-origin:center center;">Date</div>
<div style="left:358.59px;top:424.60px;height:23px;line-height:23px;font-size:16.146px;color:#000;white-space:nowrap;font-weight:700;transform:rotate(0.03deg) scaleX(0.9163);transform-origin:center center;">Branch</div>
<div style="left:464.89px;top:424.60px;height:23px;line-height:23px;font-size:16.146px;color:#000;white-space:nowrap;font-weight:700;transform:rotate(0.03deg) scaleX(1.0366);transform-origin:center center;">Target Amount</div>
<div style="left:631.44px;top:424.60px;height:23px;line-height:23px;font-size:16.146px;color:#000;white-space:nowrap;font-weight:700;transform:rotate(0.03deg) scaleX(1.0100);transform-origin:center center;">Actual Amount</div>
<div style="left:793.19px;top:424.60px;height:23px;line-height:23px;font-size:16.146px;color:#000;white-space:nowrap;font-weight:700;transform:rotate(0.03deg) scaleX(0.9502);transform-origin:center center;">Year</div>
<div style="left:862.89px;top:424.60px;height:23px;line-height:23px;font-size:16.146px;color:#000;white-space:nowrap;font-weight:700;transform:rotate(0.03deg) scaleX(1.0575);transform-origin:center center;">Month</div>
<div style="left:229.55px;top:449.93px;height:20px;line-height:20px;font-size:14.04px;color:#217346;white-space:nowrap;transform:rotate(0.03deg);">2</div>
<div style="left:369.11px;top:448.23px;height:23px;line-height:23px;font-size:16.38px;color:#111;white-space:nowrap;transform:rotate(0.03deg) scaleX(0.9200);transform-origin:center center;">NYC</div>
<div style="left:507.73px;top:448.23px;height:23px;line-height:23px;font-size:16.38px;color:#111;white-space:nowrap;transform:rotate(0.03deg) scaleX(0.9404);transform-origin:center center;">471</div>
<div style="left:250.60px;top:447.80px;width:84.80px;height:23.90px;background:#e8eefa;"></div>
<div style="left:251.60px;top:446.90px;width:82.80px;height:1.80px;background:#2f62c4;"></div>
<div style="left:251.60px;top:470.80px;width:82.80px;height:1.80px;background:#2f62c4;"></div>
<div style="left:250.80px;top:451.30px;width:1.70px;height:16.90px;background:linear-gradient(180deg,#2f62c4 0 22%,transparent 22% 30%,#2f62c4 30% 100%);"></div>
<div style="left:334.60px;top:451.30px;width:1.70px;height:16.90px;background:linear-gradient(180deg,#2f62c4 0 78%,transparent 78% 86%,#2f62c4 86% 100%);"></div>
<div style="left:333.20px;top:445.60px;width:4.40px;height:4.40px;background:#2f62c4;"></div>
<div style="left:333.20px;top:469.50px;width:4.40px;height:4.40px;background:#2f62c4;"></div>
<div style="left:250.60px;top:446.20px;width:2.60px;height:3.20px;background:#2f62c4;"></div>
<div style="left:250.60px;top:470.10px;width:2.60px;height:3.20px;background:#2f62c4;"></div>
<div style="left:265.32px;top:448.53px;height:23px;line-height:23px;font-size:16.38px;color:#111;white-space:nowrap;transform:rotate(0.03deg) scaleX(0.9290);transform-origin:center center;">202503</div>
<div style="left:696.00px;top:448.50px;width:229.20px;height:23.50px;background:#fff;"></div>
<div style="left:664.17px;top:449.43px;height:23px;line-height:23px;font-size:16.38px;color:#111;white-space:nowrap;transform:rotate(0.03deg) scaleX(0.9111);transform-origin:right center;">1,60</div>
<div style="left:0;top:0;width:0;height:21px;line-height:21px;font-size:15.0px;color:#111;white-space:nowrap"><div style="left:696.07px;top:450.46px;transform:rotate(0.03deg) scaleX(0.9000);transform-origin:center center">=</div><div style="left:705.55px;top:450.46px;transform:rotate(0.03deg) scaleX(0.8700);transform-origin:left center">LEFT</div><div style="left:737.70px;top:450.46px;transform:rotate(0.03deg) scaleX(0.9000);transform-origin:center center">(</div><div style="left:742.86px;top:450.46px;color:#4a6fd0;transform:rotate(0.03deg) scaleX(0.9912);transform-origin:left center">A2</div><div style="left:761.06px;top:450.46px;transform:rotate(0.03deg) scaleX(0.9809);transform-origin:left center">,4</div><div style="left:773.25px;top:450.46px;transform:rotate(0.03deg) scaleX(0.9000);transform-origin:center center">)</div></div>
<div style="left:771.50px;top:446.60px;width:78.50px;height:2.00px;background:#217346;"></div>
<div style="left:9.40px;top:495.20px;width:917.80px;height:191.60px;background:#e6e6e6;border:2px solid #ff0000;box-sizing:border-box;box-shadow:2px 3px 6px rgba(0,0,0,0.5);"></div>
<div style="left:15.40px;top:506.40px;width:138.40px;height:26.20px;background:#fff;border:1px solid #d0d0d0;box-sizing:border-box;"></div>
<div style="left:21.17px;top:508.49px;height:21px;line-height:21px;font-size:15.1px;color:#444;white-space:nowrap;transform:rotate(0.03deg) scaleX(0.9701);transform-origin:left center;">CONCAT</div>
<svg style="left:140.60px;top:516.75px;" width="7.0" height="3.5" viewBox="0 0 7.0 3.5"><path d="M0 0H7.0L3.5 3.5Z" fill="#666"/></svg>
<div style="left:168.28px;top:514.62px;width:1.50px;height:1.50px;background:#a0a0a0;"></div>
<div style="left:168.28px;top:518.58px;width:1.50px;height:1.50px;background:#a0a0a0;"></div>
<div style="left:168.28px;top:522.54px;width:1.50px;height:1.50px;background:#a0a0a0;"></div>
<div style="left:184.40px;top:506.00px;width:107.30px;height:26.20px;background:#fff;border:1px solid #d0d0d0;box-sizing:border-box;"></div>
<svg style="left:196.24px;top:513.44px;" width="11.52" height="11.52" viewBox="0 0 11.52 11.52"><path d="M0.5 0.5L11.02 11.02M11.02 0.5L0.5 11.02" stroke="#606060" stroke-width="1.472"/></svg>
<svg style="left:230.97px;top:513.98px;" width="13.056" height="10.4448" viewBox="0 0 13.056 10.4448"><path d="M0.6 5.548799999999999L4.7001599999999994 9.465599999999998L12.456 1.1750399999999999" fill="none" stroke="#606060" stroke-width="2.176"/></svg>
<div style="left:267.79px;top:507.79px;height:22px;line-height:22px;font-size:15.667199999999998px;color:#444;white-space:nowrap;transform:rotate(0.03deg);font-family:'Liberation Serif',serif;font-style:italic;font-weight:700;">f</div>
<div style="left:272.73px;top:514.23px;height:15px;line-height:15px;font-size:10.4448px;color:#444;white-space:nowrap;transform:rotate(0.03deg);font-family:'Liberation Serif',serif;font-style:italic;font-weight:700;">x</div>
<div style="left:295.30px;top:506.00px;width:630.00px;height:69.60px;background:#fff;border:1px solid #d0d0d0;border-right:none;box-sizing:border-box;"></div>
<div style="left:0;top:0;width:0;height:21px;line-height:21px;font-size:15.0px;color:#3a3a3a;white-space:nowrap"><div style="left:307.17px;top:508.36px;transform:rotate(0.03deg) scaleX(0.9000);transform-origin:center center">=</div><div style="left:318.11px;top:508.36px;transform:rotate(0.03deg) scaleX(0.7927);transform-origin:left center">TEXT</div><div style="left:349.25px;top:508.36px;transform:rotate(0.03deg) scaleX(0.9000);transform-origin:center center">(</div><div style="left:354.00px;top:508.36px;transform:rotate(0.03deg) scaleX(0.9360);transform-origin:left center">DATE</div><div style="left:390.55px;top:508.36px;transform:rotate(0.03deg) scaleX(0.9000);transform-origin:center center">(</div><div style="left:395.02px;top:508.36px;transform:rotate(0.03deg) scaleX(0.7761);transform-origin:left center">LEFT</div><div style="left:424.05px;top:508.36px;transform:rotate(0.03deg) scaleX(0.9000);transform-origin:center center">(</div><div style="left:428.51px;top:508.36px;transform:rotate(0.03deg) scaleX(1.0506);transform-origin:left center">A2</div><div style="left:447.14px;top:508.36px;transform:rotate(0.03deg) scaleX(1.0173);transform-origin:left center">,4</div><div style="left:458.95px;top:508.36px;transform:rotate(0.03deg) scaleX(0.9000);transform-origin:center center">)</div><div style="left:463.22px;top:508.36px;transform:rotate(0.03deg) scaleX(0.9000);transform-origin:center center">,<span style="font-size:0"> </span></div><div style="left:471.85px;top:508.36px;transform:rotate(0.03deg) scaleX(0.8724);transform-origin:left center">RIGHT</div><div style="left:513.25px;top:508.36px;transform:rotate(0.03deg) scaleX(0.9000);transform-origin:center center">(</div><div style="left:517.93px;top:508.36px;transform:rotate(0.03deg) scaleX(1.0268);transform-origin:left center">A2</div><div style="left:536.18px;top:508.36px;transform:rotate(0.03deg) scaleX(0.9628);transform-origin:left center">,2</div><div style="left:547.40px;top:508.36px;transform:rotate(0.03deg) scaleX(0.9000);transform-origin:center center">)</div><div style="left:551.77px;top:508.36px;transform:rotate(0.03deg) scaleX(0.9000);transform-origin:center center">,<span style="font-size:0"> </span></div><div style="left:558.98px;top:508.36px;transform:rotate(0.03deg) scaleX(0.9000);transform-origin:center center">1</div><div style="left:565.25px;top:508.36px;transform:rotate(0.03deg) scaleX(0.9000);transform-origin:center center">)</div><div style="left:569.87px;top:508.36px;transform:rotate(0.03deg) scaleX(0.9000);transform-origin:center center">,<span style="font-size:0"> </span></div><div style="left:580.43px;top:508.36px;transform:rotate(0.03deg) scaleX(1.0292);transform-origin:left center">"mmm"</div><div style="left:629.90px;top:508.36px;transform:rotate(0.03deg) scaleX(0.9000);transform-origin:center center">)</div></div>
<div style="left:45.80px;top:611.00px;width:879.40px;height:73.60px;background:#fff;"></div>
<div style="left:680.60px;top:586.00px;width:81.90px;height:25.00px;background:#d2d2d2;"></div>
<div style="left:11.40px;top:635.40px;width:34.40px;height:24.70px;background:#d2d2d2;"></div>
<div style="left:599.00px;top:611.00px;width:163.50px;height:24.40px;background:#ffff00;"></div>
<div style="left:135.60px;top:611.00px;width:1.00px;height:73.60px;background:#d4d4d4;"></div>
<div style="left:243.50px;top:611.00px;width:1.00px;height:73.60px;background:#d4d4d4;"></div>
<div style="left:422.00px;top:611.00px;width:1.00px;height:73.60px;background:#d4d4d4;"></div>
<div style="left:598.50px;top:611.00px;width:1.00px;height:73.60px;background:#d4d4d4;"></div>
<div style="left:680.10px;top:611.00px;width:1.00px;height:73.60px;background:#d4d4d4;"></div>
<div style="left:762.00px;top:611.00px;width:1.00px;height:73.60px;background:#d4d4d4;"></div>
<div style="left:842.70px;top:611.00px;width:1.00px;height:73.60px;background:#d4d4d4;"></div>
<div style="left:45.80px;top:634.90px;width:879.40px;height:1.00px;background:#d4d4d4;"></div>
<div style="left:45.80px;top:659.60px;width:879.40px;height:1.00px;background:#d4d4d4;"></div>
<div style="left:45.20px;top:586.00px;width:1.20px;height:25.00px;background:#b4b4b4;"></div>
<div style="left:135.50px;top:586.00px;width:1.20px;height:25.00px;background:#b4b4b4;"></div>
<div style="left:243.40px;top:586.00px;width:1.20px;height:25.00px;background:#b4b4b4;"></div>
<div style="left:421.90px;top:586.00px;width:1.20px;height:25.00px;background:#b4b4b4;"></div>
<div style="left:598.40px;top:586.00px;width:1.20px;height:25.00px;background:#b4b4b4;"></div>
<div style="left:680.00px;top:586.00px;width:1.20px;height:25.00px;background:#b4b4b4;"></div>
<div style="left:761.90px;top:586.00px;width:1.20px;height:25.00px;background:#b4b4b4;"></div>
<div style="left:842.60px;top:586.00px;width:1.20px;height:25.00px;background:#b4b4b4;"></div>
<div style="left:11.40px;top:610.40px;width:913.80px;height:1.20px;background:#b0b0b0;"></div>
<div style="left:45.20px;top:611.00px;width:1.20px;height:73.60px;background:#b0b0b0;"></div>
<div style="left:11.40px;top:634.90px;width:34.40px;height:1.00px;background:#c4c4c4;"></div>
<div style="left:11.40px;top:659.60px;width:34.40px;height:1.00px;background:#c4c4c4;"></div>
<svg style="left:25.70px;top:591.20px;" width="16.500000000000004" height="16.199999999999932" viewBox="0 0 16.500000000000004 16.199999999999932"><path d="M16.500000000000004 0V16.199999999999932H0Z" fill="#b8b8b8"/></svg>
<div style="left:680.60px;top:609.80px;width:81.90px;height:2.00px;background:#217346;"></div>
<div style="left:680.60px;top:634.20px;width:82.90px;height:2.00px;background:#217346;"></div>
<div style="left:44.20px;top:635.40px;width:2.00px;height:24.70px;background:#217346;"></div>
<div style="left:85.72px;top:585.80px;height:22px;line-height:22px;font-size:15.6845px;color:#333;white-space:nowrap;transform:rotate(0.03deg);">A</div>
<div style="left:184.82px;top:585.80px;height:22px;line-height:22px;font-size:15.6845px;color:#333;white-space:nowrap;transform:rotate(0.03deg);">B</div>
<div style="left:327.59px;top:585.80px;height:22px;line-height:22px;font-size:15.6845px;color:#333;white-space:nowrap;transform:rotate(0.03deg);">C</div>
<div style="left:505.09px;top:585.80px;height:22px;line-height:22px;font-size:15.6845px;color:#333;white-space:nowrap;transform:rotate(0.03deg);">D</div>
<div style="left:634.57px;top:585.80px;height:22px;line-height:22px;font-size:15.6845px;color:#333;white-space:nowrap;transform:rotate(0.03deg);">E</div>
<div style="left:716.76px;top:585.80px;height:22px;line-height:22px;font-size:15.6845px;color:#217346;white-space:nowrap;transform:rotate(0.03deg);">F</div>
<div style="left:796.75px;top:585.80px;height:22px;line-height:22px;font-size:15.6845px;color:#333;white-space:nowrap;transform:rotate(0.03deg);">G</div>
<div style="left:878.54px;top:585.80px;height:22px;line-height:22px;font-size:15.6845px;color:#333;white-space:nowrap;transform:rotate(0.03deg);">H</div>
<div style="left:24.08px;top:613.00px;height:21px;line-height:21px;font-size:14.82px;color:#444;white-space:nowrap;transform:rotate(0.03deg);">1</div>
<div style="left:72.48px;top:611.76px;height:24px;line-height:24px;font-size:17.043000000000003px;color:#000;white-space:nowrap;font-weight:700;transform:rotate(0.03deg) scaleX(1.0234);transform-origin:center center;">Date</div>
<div style="left:160.69px;top:611.76px;height:24px;line-height:24px;font-size:17.043000000000003px;color:#000;white-space:nowrap;font-weight:700;transform:rotate(0.03deg) scaleX(0.9163);transform-origin:center center;">Branch</div>
<div style="left:273.60px;top:611.76px;height:24px;line-height:24px;font-size:17.043000000000003px;color:#000;white-space:nowrap;font-weight:700;transform:rotate(0.03deg) scaleX(1.0366);transform-origin:center center;">Target Amount</div>
<div style="left:450.47px;top:611.76px;height:24px;line-height:24px;font-size:17.043000000000003px;color:#000;white-space:nowrap;font-weight:700;transform:rotate(0.03deg) scaleX(1.0100);transform-origin:center center;">Actual Amount</div>
<div style="left:621.79px;top:611.76px;height:24px;line-height:24px;font-size:17.043000000000003px;color:#000;white-space:nowrap;font-weight:700;transform:rotate(0.03deg) scaleX(0.9502);transform-origin:center center;">Year</div>
<div style="left:696.00px;top:611.76px;height:24px;line-height:24px;font-size:17.043000000000003px;color:#000;white-space:nowrap;font-weight:700;transform:rotate(0.03deg) scaleX(1.0575);transform-origin:center center;">Month</div>
<div style="left:24.08px;top:637.55px;height:21px;line-height:21px;font-size:14.82px;color:#217346;white-space:nowrap;transform:rotate(0.03deg);">2</div>
<div style="left:171.80px;top:635.90px;height:24px;line-height:24px;font-size:17.290000000000003px;color:#111;white-space:nowrap;transform:rotate(0.03deg) scaleX(0.9200);transform-origin:center center;">NYC</div>
<div style="left:318.83px;top:635.90px;height:24px;line-height:24px;font-size:17.290000000000003px;color:#111;white-space:nowrap;transform:rotate(0.03deg) scaleX(0.9404);transform-origin:center center;">471</div>
<div style="left:24.08px;top:662.15px;height:21px;line-height:21px;font-size:14.82px;color:#444;white-space:nowrap;transform:rotate(0.03deg);">3</div>
<div style="left:62.10px;top:660.50px;height:24px;line-height:24px;font-size:17.290000000000003px;color:#111;white-space:nowrap;transform:rotate(0.03deg) scaleX(0.9290);transform-origin:center center;">202509</div>
<div style="left:179.48px;top:660.50px;height:24px;line-height:24px;font-size:17.290000000000003px;color:#111;white-space:nowrap;transform:rotate(0.03deg) scaleX(0.9200);transform-origin:center center;">LA</div>
<div style="left:318.83px;top:660.50px;height:24px;line-height:24px;font-size:17.290000000000003px;color:#111;white-space:nowrap;transform:rotate(0.03deg) scaleX(0.9404);transform-origin:center center;">598</div>
<div style="left:46.80px;top:635.20px;width:89.80px;height:25.00px;background:#dae4f4;"></div>
<div style="left:47.80px;top:634.30px;width:87.80px;height:1.80px;background:#2f62c4;"></div>
<div style="left:47.80px;top:659.30px;width:87.80px;height:1.80px;background:#2f62c4;"></div>
<div style="left:47.00px;top:638.70px;width:1.70px;height:18.00px;background:linear-gradient(180deg,#2f62c4 0 22%,transparent 22% 30%,#2f62c4 30% 100%);"></div>
<div style="left:135.80px;top:638.70px;width:1.70px;height:18.00px;background:linear-gradient(180deg,#2f62c4 0 78%,transparent 78% 86%,#2f62c4 86% 100%);"></div>
<div style="left:134.40px;top:633.00px;width:4.40px;height:4.40px;background:#2f62c4;"></div>
<div style="left:134.40px;top:658.00px;width:4.40px;height:4.40px;background:#2f62c4;"></div>
<div style="left:46.80px;top:633.60px;width:2.60px;height:3.20px;background:#2f62c4;"></div>
<div style="left:46.80px;top:658.60px;width:2.60px;height:3.20px;background:#2f62c4;"></div>
<div style="left:62.10px;top:636.20px;height:24px;line-height:24px;font-size:17.290000000000003px;color:#111;white-space:nowrap;transform:rotate(0.03deg) scaleX(0.9290);transform-origin:center center;">202503</div>
<div class="ov" style="left:423px;top:661px;width:94.6px;height:23px"><div style="left:71.13px;top:-0.85px;height:24px;line-height:24px;font-size:17.290000000000003px;color:#111;white-space:nowrap;transform:rotate(0.03deg) scaleX(0.9404);transform-origin:center center;">233</div></div>
<div style="left:518.60px;top:636.00px;width:406.60px;height:24.80px;background:#fff;"></div>
<div style="left:517.60px;top:660.00px;width:407.60px;height:24.80px;background:#fff;"></div>
<div style="left:485.24px;top:636.55px;height:24px;line-height:24px;font-size:17.290000000000003px;color:#111;white-space:nowrap;transform:rotate(0.03deg) scaleX(0.9111);transform-origin:right center;">1,60</div>
<div style="left:0;top:0;width:0;height:22px;line-height:22px;font-size:15.8px;color:#111;white-space:nowrap"><div style="left:518.99px;top:637.54px;transform:rotate(0.03deg) scaleX(0.9000);transform-origin:center center">=</div><div style="left:529.70px;top:637.54px;transform:rotate(0.03deg) scaleX(0.8866);transform-origin:left center">TEXT</div><div style="left:565.47px;top:637.54px;transform:rotate(0.03deg) scaleX(0.9000);transform-origin:center center">(</div><div style="left:570.65px;top:637.54px;transform:rotate(0.03deg) scaleX(0.9546);transform-origin:left center">DATE</div><div style="left:610.87px;top:637.54px;color:#d8506e;transform:rotate(0.03deg) scaleX(0.9000);transform-origin:center center">(</div><div style="left:615.72px;top:637.54px;transform:rotate(0.03deg) scaleX(0.8610);transform-origin:left center">LEFT</div><div style="left:648.97px;top:637.54px;color:#a070c8;transform:rotate(0.03deg) scaleX(0.9000);transform-origin:center center">(</div><div style="left:653.58px;top:637.54px;color:#4a6fd0;transform:rotate(0.03deg) scaleX(1.0425);transform-origin:left center">A2</div><div style="left:673.16px;top:637.54px;transform:rotate(0.03deg) scaleX(1.0692);transform-origin:left center">,4</div><div style="left:686.82px;top:637.54px;color:#a070c8;transform:rotate(0.03deg) scaleX(0.9000);transform-origin:center center">)</div><div style="left:692.31px;top:637.54px;transform:rotate(0.03deg) scaleX(0.9000);transform-origin:center center">,<span style="font-size:0"> </span></div><div style="left:701.52px;top:637.54px;transform:rotate(0.03deg) scaleX(0.9817);transform-origin:left center">RIGHT</div><div style="left:749.17px;top:637.54px;color:#a070c8;transform:rotate(0.03deg) scaleX(0.9000);transform-origin:center center">(</div><div style="left:753.57px;top:637.54px;color:#4a6fd0;transform:rotate(0.03deg) scaleX(1.0481);transform-origin:left center">A2</div><div style="left:773.46px;top:637.54px;transform:rotate(0.03deg) scaleX(1.0606);transform-origin:left center">,2</div><div style="left:786.47px;top:637.54px;color:#a070c8;transform:rotate(0.03deg) scaleX(0.9000);transform-origin:center center">)</div><div style="left:791.01px;top:637.54px;transform:rotate(0.03deg) scaleX(0.9000);transform-origin:center center">,<span style="font-size:0"> </span></div><div style="left:800.81px;top:637.54px;transform:rotate(0.03deg) scaleX(0.9000);transform-origin:center center">1</div><div style="left:808.67px;top:637.54px;color:#d8506e;transform:rotate(0.03deg) scaleX(0.9000);transform-origin:center center">)</div><div style="left:813.06px;top:637.54px;transform:rotate(0.03deg) scaleX(0.9000);transform-origin:center center">,<span style="font-size:0"> </span></div><div style="left:824.72px;top:637.54px;transform:rotate(0.03deg) scaleX(1.1155);transform-origin:left center">"mmm"</div><div style="left:881.17px;top:637.54px;transform:rotate(0.03deg) scaleX(0.9000);transform-origin:center center">)</div></div>
<div style="left:739.50px;top:635.60px;width:1.00px;height:26.20px;background:#444;"></div>
<div style="left:680.60px;top:634.20px;width:82.90px;height:2.00px;background:#217346;"></div>
<div style="left:315.40px;top:741.40px;width:68.80px;height:50.60px;background:#e7e6e6;border:1.5px solid #7f7f7f;border-bottom:none;border-radius:8.5px 8.5px 0 0;box-sizing:border-box;"></div>
<div style="left:335.86px;top:752.58px;height:28px;line-height:28px;font-size:19.7px;color:#111;white-space:nowrap;transform:rotate(0.03deg) scaleX(1.0554);transform-origin:left center;">D1</div>
</body></html>
